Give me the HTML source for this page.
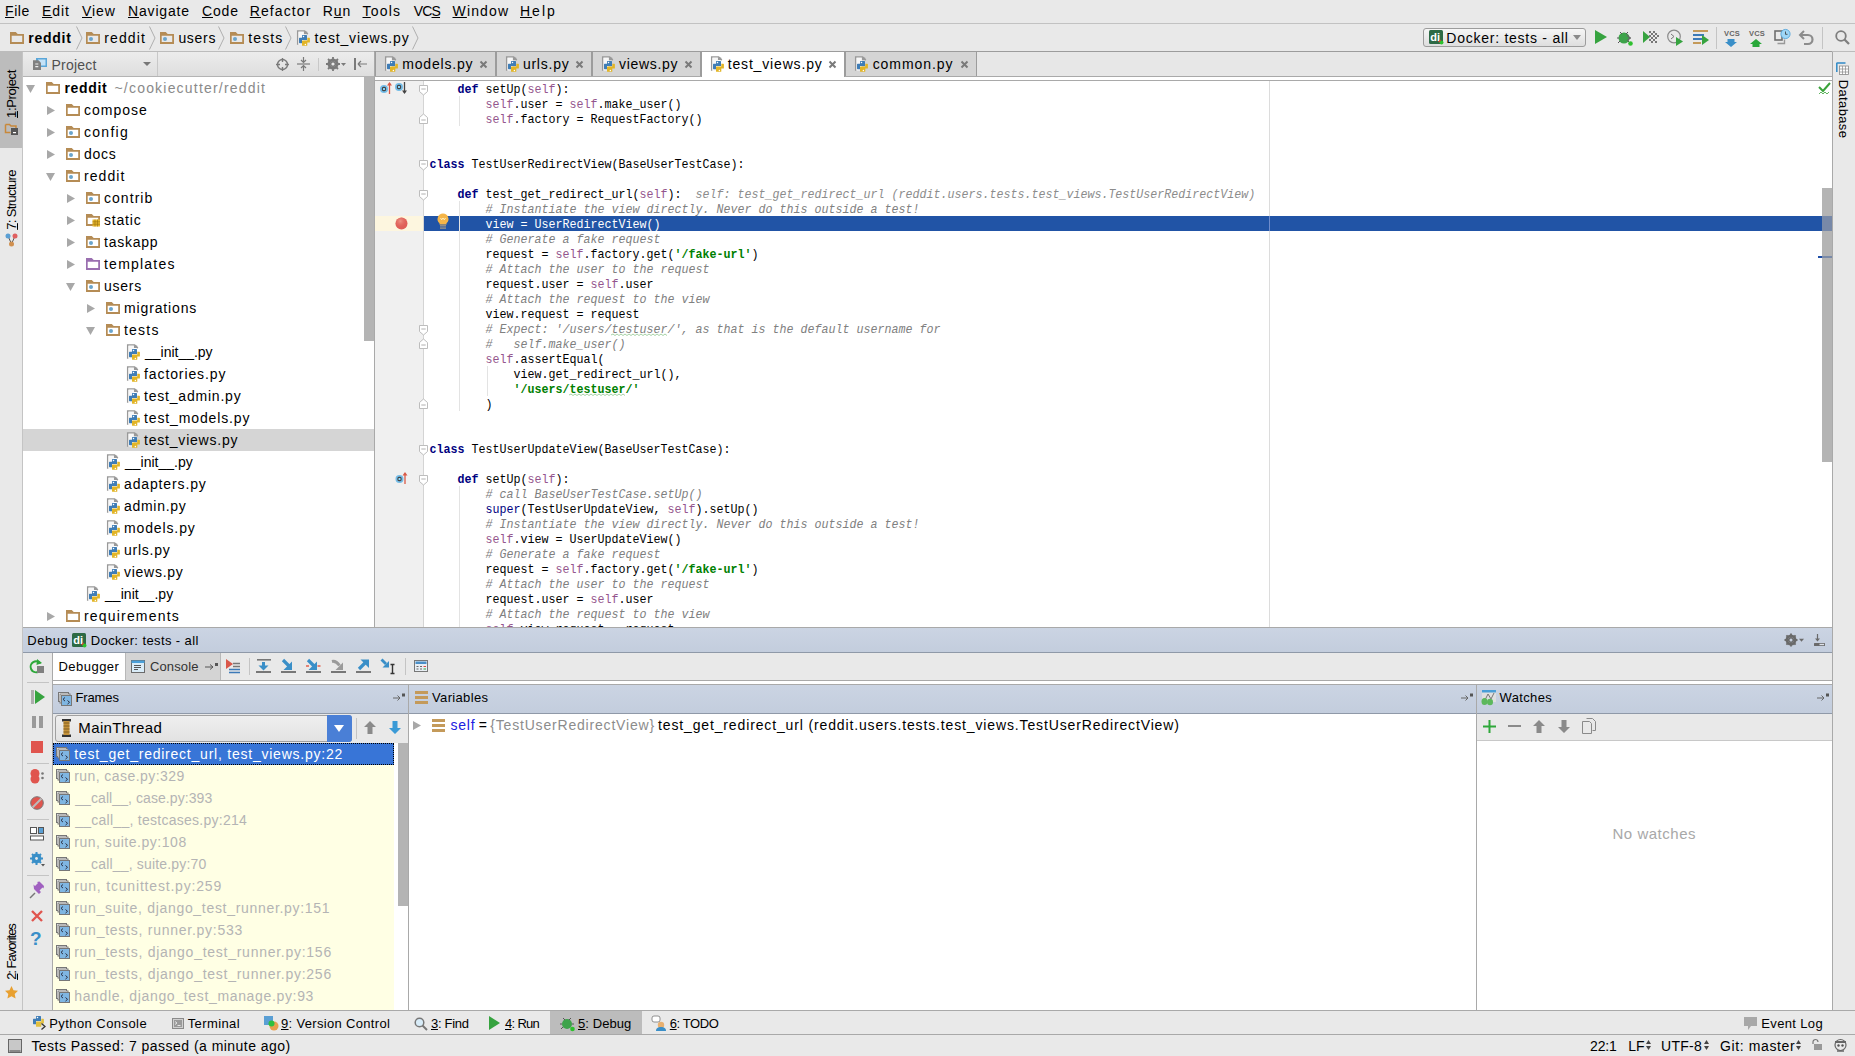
<!DOCTYPE html><html><head><meta charset="utf-8"><style>
*{margin:0;padding:0;box-sizing:border-box}
html,body{width:1855px;height:1056px;overflow:hidden;background:#e9e9e9;position:relative}
body>div{position:absolute}
.t{font-family:"Liberation Sans",sans-serif;font-size:13.5px;letter-spacing:0.95px;word-spacing:-2px;line-height:16px;white-space:pre;color:#000;transform:translateY(-8px)}
.c{font-family:"Liberation Mono",monospace;font-size:13.33px;line-height:15px;white-space:pre;color:#000}
.cw{position:absolute;left:0;top:0;width:1600px;height:600px;transform:scaleX(0.875);transform-origin:0 0}
.us{letter-spacing:-0.6px}
.k{color:#000080;font-weight:bold}
.sf{color:#94558d}
.cm{color:#808080;font-style:italic}
.st{color:#008000;font-weight:bold}
.bi{color:#000080}
.iv{color:#8c8c8c;font-style:italic}
svg{position:absolute;overflow:visible}
u{text-decoration:underline;text-underline-offset:1px}

.vt{font-family:"Liberation Sans",sans-serif;font-size:13px;letter-spacing:0.6px;word-spacing:-2px;line-height:14px;white-space:pre;color:#000;transform:translate(-50%,-50%) rotate(-90deg)}
</style></head><body><div style="left:0px;top:0px;width:1855px;height:23px;background:#e9e9e9"></div><div style="left:0px;top:23px;width:1855px;height:1px;background:#c2c2c2"></div><div class="t" style="left:5.00px;top:11px;font-size:14px;letter-spacing:0.576px;word-spacing:0"><u>F</u>ile</div><div class="t" style="left:42.00px;top:11px;font-size:14px;letter-spacing:0.922px;word-spacing:0"><u>E</u>dit</div><div class="t" style="left:82.00px;top:11px;font-size:14px;letter-spacing:0.923px;word-spacing:0"><u>V</u>iew</div><div class="t" style="left:128.00px;top:11px;font-size:14px;letter-spacing:0.826px;word-spacing:0"><u>N</u>avigate</div><div class="t" style="left:202.00px;top:11px;font-size:14px;letter-spacing:0.856px;word-spacing:0"><u>C</u>ode</div><div class="t" style="left:249.75px;top:11px;font-size:14px;letter-spacing:1.107px;word-spacing:0"><u>R</u>efactor</div><div class="t" style="left:322.75px;top:11px;font-size:14px;letter-spacing:0.927px;word-spacing:0">R<u>u</u>n</div><div class="t" style="left:362.50px;top:11px;font-size:14px;letter-spacing:1.204px;word-spacing:0"><u>T</u>ools</div><div class="t" style="left:413.75px;top:11px;font-size:14px;letter-spacing:-0.849px;word-spacing:0">VC<u>S</u></div><div class="t" style="left:452.50px;top:11px;font-size:14px;letter-spacing:1.163px;word-spacing:0"><u>W</u>indow</div><div class="t" style="left:520.00px;top:11px;font-size:14px;letter-spacing:1.998px;word-spacing:0"><u>H</u>elp</div><div style="left:0px;top:24px;width:1855px;height:27px;background:#e9e9e9"></div><div style="left:0px;top:51px;width:1855px;height:1px;background:#bcbcbc"></div><div style="left:374px;top:51px;width:1458px;height:1px;background:#9c9c9c"></div><svg style="left:10px;top:32px" width="14" height="12" viewBox="0 0 14 12"><path fill-rule="evenodd" d="M0 0H5.8L7.7 2H14V12H0Z M1.7 3.8V10.1H12.2V3.8Z" fill="#b58c55"/></svg><div class="t" style="left:28.30px;top:38px;font-weight:bold;font-size:14px;letter-spacing:0.734px;word-spacing:0">reddit</div><svg style="left:76px;top:26px" width="7" height="24" viewBox="0 0 7 24"><path d="M0.5 0.5L6 12L0.5 23.5" fill="none" stroke="#a8a8a8" stroke-width="0.9"/></svg><svg style="left:86px;top:32px" width="14" height="12" viewBox="0 0 14 12"><path fill-rule="evenodd" d="M0 0H5.8L7.7 2H14V12H0Z M1.7 3.8V10.1H12.2V3.8Z" fill="#b58c55"/><circle cx="5" cy="6.9" r="2" fill="#6aa4cc"/></svg><div class="t" style="left:104.30px;top:38px;font-size:14px;letter-spacing:1.114px;word-spacing:0">reddit</div><svg style="left:148.5px;top:26px" width="7" height="24" viewBox="0 0 7 24"><path d="M0.5 0.5L6 12L0.5 23.5" fill="none" stroke="#a8a8a8" stroke-width="0.9"/></svg><svg style="left:160px;top:32px" width="14" height="12" viewBox="0 0 14 12"><path fill-rule="evenodd" d="M0 0H5.8L7.7 2H14V12H0Z M1.7 3.8V10.1H12.2V3.8Z" fill="#b58c55"/><circle cx="5" cy="6.9" r="2" fill="#6aa4cc"/></svg><div class="t" style="left:178.40px;top:38px;font-size:14px;letter-spacing:0.691px;word-spacing:0">users</div><svg style="left:218px;top:26px" width="7" height="24" viewBox="0 0 7 24"><path d="M0.5 0.5L6 12L0.5 23.5" fill="none" stroke="#a8a8a8" stroke-width="0.9"/></svg><svg style="left:230px;top:32px" width="14" height="12" viewBox="0 0 14 12"><path fill-rule="evenodd" d="M0 0H5.8L7.7 2H14V12H0Z M1.7 3.8V10.1H12.2V3.8Z" fill="#b58c55"/><circle cx="5" cy="6.9" r="2" fill="#6aa4cc"/></svg><div class="t" style="left:248.30px;top:38px;font-size:14px;letter-spacing:1.084px;word-spacing:0">tests</div><svg style="left:285px;top:26px" width="7" height="24" viewBox="0 0 7 24"><path d="M0.5 0.5L6 12L0.5 23.5" fill="none" stroke="#a8a8a8" stroke-width="0.9"/></svg><svg style="left:297px;top:29px" width="14" height="17" viewBox="0 0 14 17"><path d="M0.7 15.7V1.9H7.6L10.8 5.1" fill="none" stroke="#999" stroke-width="1.5"/><rect x="6.8" y="2.6" width="3.4" height="2.4" fill="#999"/><rect x="1.4" y="2.6" width="5.4" height="13" fill="#f7f7f7"/><path d="M5.6 6h3.8a0.6 0.6 0 0 1 0.6 0.6V11.1H5V14.2H2.6A0.6 0.6 0 0 1 2 13.6V9.4A0.6 0.6 0 0 1 2.6 8.8H5V6.6A0.6 0.6 0 0 1 5.6 6Z" fill="#3f7db6"/><circle cx="6.5" cy="7.5" r="0.75" fill="#fff"/><path d="M10.3 8.7H12.3A0.6 0.6 0 0 1 12.9 9.3V13A0.6 0.6 0 0 1 12.3 13.6H10.3V16.2A0.6 0.6 0 0 1 9.7 16.8H5.6A0.6 0.6 0 0 1 5 16.2V12.1A0.6 0.6 0 0 1 5.6 11.5H10.3Z" fill="#e2b526"/><circle cx="8.4" cy="15.5" r="0.75" fill="#fff"/></svg><div class="t" style="left:314.50px;top:38px;font-size:14px;letter-spacing:0.851px;word-spacing:0">test_views.py</div><svg style="left:412px;top:26px" width="7" height="24" viewBox="0 0 7 24"><path d="M0.5 0.5L6 12L0.5 23.5" fill="none" stroke="#a8a8a8" stroke-width="0.9"/></svg><div style="left:1423px;top:28px;width:163px;height:19px;background:linear-gradient(#f6f6f6,#dedede);border:1px solid #9c9c9c;border-radius:3px"></div><svg style="left:1429px;top:30px" width="14" height="14" viewBox="0 0 14 14"><rect x="0" y="0" width="14" height="14" rx="1.5" fill="#2d6a45"/><text x="1.2" y="10.5" font-family="Liberation Sans" font-weight="bold" font-size="11" fill="#fff">di</text><path d="M9 11.5l3-2v4z" fill="#e03030"/><circle cx="12.5" cy="12.5" r="2" fill="#2ec02e"/></svg><div class="t" style="left:1446.30px;top:38px;font-size:14px;letter-spacing:0.748px;word-spacing:0">Docker: tests - all</div><svg style="left:1573px;top:35px" width="8" height="5" viewBox="0 0 8 5"><path d="M0 0h8l-4 5z" fill="#8a8a8a"/></svg><svg style="left:1595px;top:30px" width="12" height="14" viewBox="0 0 12 14"><path d="M0 0L12 7L0 14z" fill="#36a33f"/></svg><svg style="left:1617px;top:29px" width="17" height="17" viewBox="0 0 17 17"><ellipse cx="7" cy="9" rx="5.5" ry="5.5" fill="#3da34a"/><path d="M3 3l2 2M11 3l-2 2M0 9h2M12 9h2M1 14l2-2M13 14l-2-2" stroke="#555" stroke-width="1"/><path d="M10 6l3 3l-3 3" fill="none" stroke="#666" stroke-width="1.2"/><circle cx="13.5" cy="14.5" r="2.3" fill="#2ec02e"/></svg><svg style="left:1643px;top:30px" width="16" height="14" viewBox="0 0 16 14"><path d="M0 1L7 7L0 13z" fill="#36a33f"/><g fill="#777"><rect x="6" y="1" width="2" height="2"/><rect x="10" y="1" width="2" height="2"/><rect x="8" y="3" width="2" height="2"/><rect x="12" y="3" width="2" height="2"/><rect x="6" y="5" width="2" height="2"/><rect x="10" y="5" width="2" height="2"/><rect x="14" y="5" width="2" height="2"/><rect x="8" y="7" width="2" height="2"/><rect x="12" y="7" width="2" height="2"/><rect x="6" y="9" width="2" height="2"/><rect x="10" y="9" width="2" height="2"/><rect x="8" y="11" width="2" height="2"/><rect x="12" y="11" width="2" height="2"/></g></svg><svg style="left:1667px;top:29px" width="17" height="17" viewBox="0 0 17 17"><circle cx="7" cy="7.5" r="6.3" fill="none" stroke="#8a8a8a" stroke-width="1.2"/><path d="M4 5l3 2.5l-3 2.5" fill="none" stroke="#777" stroke-width="1"/><path d="M9 8L16 12.5L9 17z" fill="#36a33f"/></svg><svg style="left:1693px;top:30px" width="16" height="15" viewBox="0 0 16 15"><rect x="0" y="0" width="15" height="2" fill="#c49a5a"/><rect x="0" y="4" width="11" height="2" fill="#3d7ab8"/><rect x="0" y="8" width="9" height="2" fill="#3d7ab8"/><rect x="0" y="12" width="8" height="2" fill="#c49a5a"/><path d="M9 5L16 10L9 15z" fill="#36a33f"/></svg><div style="left:1716px;top:27px;width:1px;height:22px;background:#c4c4c4"></div><svg style="left:1724px;top:30px" width="14" height="17" viewBox="0 0 14 17"><text x="0" y="6" font-family="Liberation Sans" font-size="7.5" font-weight="bold" fill="#666" letter-spacing="0.2">VCS</text><path d="M3.5 9v3H1l6 5l6-5h-2.5V9z" fill="#3a8fc8"/></svg><svg style="left:1749px;top:30px" width="14" height="17" viewBox="0 0 14 17"><text x="0" y="6" font-family="Liberation Sans" font-size="7.5" font-weight="bold" fill="#666" letter-spacing="0.2">VCS</text><path d="M3.5 17v-3H1l6-5l6 5h-2.5v3z" fill="#2aa83a"/></svg><svg style="left:1774px;top:29px" width="16" height="17" viewBox="0 0 16 17"><rect x="1" y="2" width="7" height="9" fill="none" stroke="#6e6e6e" stroke-width="1.6"/><path d="M3.5 14.5h7v-4" fill="none" stroke="#999" stroke-width="1.4"/><circle cx="11.5" cy="5" r="4.6" fill="#9fd6f6" stroke="#4a9fd8" stroke-width="0.8"/><path d="M11.5 2.5v2.8h2" fill="none" stroke="#333" stroke-width="0.8"/></svg><svg style="left:1799px;top:30px" width="15" height="15" viewBox="0 0 15 15"><path d="M5 1L1 5l4 4" fill="none" stroke="#8c8c8c" stroke-width="2"/><path d="M2 5h7a4.5 4.5 0 0 1 0 9h-4" fill="none" stroke="#8c8c8c" stroke-width="2.2"/></svg><div style="left:1822px;top:27px;width:1px;height:22px;background:#c4c4c4"></div><svg style="left:1835px;top:30px" width="15" height="15" viewBox="0 0 15 15"><circle cx="6" cy="6" r="4.8" fill="none" stroke="#7e7e7e" stroke-width="1.8"/><path d="M9.5 9.5L14 14" stroke="#7e7e7e" stroke-width="2.3"/></svg><div style="left:0px;top:52px;width:22px;height:958px;background:#e9e9e9"></div><div style="left:22px;top:52px;width:1px;height:958px;background:#c4c4c4"></div><div style="left:0px;top:52px;width:22px;height:96px;background:#bcbcbc"></div><div class="vt" style="left:12px;top:94.11px;font-size:13px;letter-spacing:-0.386px;word-spacing:0"><u>1</u>:Project</div><svg style="left:5px;top:123px" width="13" height="12" viewBox="0 0 13 12"><path d="M0.5 1.5h4l1.5 1.5h5v3" fill="none" stroke="#c8883a" stroke-width="1.5"/><path d="M0.5 1.5v8h5" fill="none" stroke="#c8883a" stroke-width="1.5"/><rect x="6" y="5" width="7" height="7" fill="#555"/><rect x="8" y="9" width="3" height="1.2" fill="#fff"/></svg><div class="vt" style="left:12px;top:199.68px;font-size:13px;letter-spacing:-0.633px;word-spacing:0"><u>7</u>: Structure</div><svg style="left:5px;top:233px" width="13" height="14" viewBox="0 0 13 14"><path d="M3 3L6.5 11L10 3" fill="none" stroke="#555" stroke-width="1"/><circle cx="3" cy="3" r="2.5" fill="#5a9fd4"/><circle cx="10" cy="3" r="2.5" fill="#e06060"/><circle cx="6.5" cy="11" r="2.5" fill="#d09050"/></svg><div class="vt" style="left:12px;top:951.89px;font-size:13px;letter-spacing:-1.019px;word-spacing:0"><u>2</u>: Favorites</div><svg style="left:5px;top:986px" width="13" height="13" viewBox="0 0 13 13"><path d="M6.5 0l2 4.3l4.5 0.5l-3.3 3.1l0.9 4.6l-4.1-2.3l-4.1 2.3l0.9-4.6L0 4.8l4.5-0.5z" fill="#e8a030"/></svg><div style="left:1832px;top:52px;width:1px;height:958px;background:#a9a9a9"></div><svg style="left:1836px;top:62px" width="13" height="13" viewBox="0 0 13 13"><path d="M0.5 1h9" stroke="#3a8fc8" stroke-width="1.6"/><path d="M0.8 1v9" stroke="#3a8fc8" stroke-width="1.6"/><rect x="3.5" y="4" width="9" height="8.5" fill="#fff" stroke="#888" stroke-width="0.8"/><path d="M3.5 7h9M3.5 10h9M6.5 4v8.5M9.5 4v8.5" stroke="#888" stroke-width="0.7"/></svg><div class="vt" style="left:1843px;top:108.68px;font-size:13px;transform:translate(-50%,-50%) rotate(90deg);letter-spacing:0.369px;word-spacing:0">Database</div><div style="left:23px;top:52px;width:351px;height:24px;background:linear-gradient(#ececec,#dedede)"></div><div style="left:23px;top:76px;width:351px;height:1px;background:#b4b4b4"></div><div style="left:374px;top:52px;width:1px;height:575px;background:#a9a9a9"></div><svg style="left:33px;top:58px" width="14" height="12" viewBox="0 0 14 12"><rect x="3" y="0" width="11" height="9" fill="#5aa6d8"/><rect x="5" y="1.5" width="7.5" height="6" fill="#c4e2f7"/><path d="M0 2.3h5.5l2.5 2.5V12H0z" fill="#808080"/><path d="M2.3 6h3M2.3 8.6h3" stroke="#eee" stroke-width="1.1"/></svg><div class="t" style="left:51.50px;top:65px;color:#505050;font-size:14px;letter-spacing:0.203px;word-spacing:0">Project</div><svg style="left:143px;top:62px" width="8" height="4" viewBox="0 0 8 4"><path d="M0 0h8l-4 4z" fill="#777"/></svg><div style="left:157px;top:52px;width:1px;height:24px;background:#c8c8c8"></div><svg style="left:276px;top:58px" width="13" height="13" viewBox="0 0 13 13"><circle cx="6.5" cy="6.5" r="5" fill="none" stroke="#7a7a7a" stroke-width="1.4"/><path d="M6.5 0v4M6.5 9v4M0 6.5h4M9 6.5h4" stroke="#7a7a7a" stroke-width="1.4"/></svg><svg style="left:297px;top:57px" width="13" height="14" viewBox="0 0 13 14"><path d="M0 7h13" stroke="#7a7a7a" stroke-width="1.2"/><path d="M6.5 0v5M4 3l2.5 2.5L9 3M6.5 14v-5M4 11l2.5-2.5L9 11" fill="none" stroke="#7a7a7a" stroke-width="1.2"/></svg><div style="left:318px;top:58px;width:1px;height:13px;background:#c8c8c8"></div><svg style="left:326px;top:57px" width="20" height="14" viewBox="0 0 20 14"><circle cx="7" cy="7" r="4.2" fill="none" stroke="#7a7a7a" stroke-width="2.6"/><path d="M7 0v14M0 7h14M2 2l10 10M12 2L2 12" stroke="#7a7a7a" stroke-width="1.8"/><circle cx="7" cy="7" r="1.6" fill="#e9e9e9"/><path d="M15 6h5l-2.5 3z" fill="#7a7a7a"/></svg><svg style="left:354px;top:58px" width="13" height="12" viewBox="0 0 13 12"><rect x="0" y="0" width="2" height="12" fill="#7a7a7a"/><path d="M4 6h9M4 6l3-3M4 6l3 3" fill="none" stroke="#7a7a7a" stroke-width="1.2"/></svg><div style="left:23px;top:77px;width:351px;height:550px;background:#fff"></div><div style="left:23px;top:429px;width:351px;height:22px;background:#d5d5d5"></div><svg style="left:26px;top:85px" width="9" height="8" viewBox="0 0 9 8"><path d="M0 0H9L4.5 8z" fill="#a8a8a8"/></svg><svg style="left:46px;top:82px" width="14" height="12" viewBox="0 0 14 12"><path fill-rule="evenodd" d="M0 0H5.8L7.7 2H14V12H0Z M1.7 3.8V10.1H12.2V3.8Z" fill="#b58c55"/></svg><div class="t" style="left:64.50px;top:88px;font-size:14px;font-weight:bold;letter-spacing:0.654px;word-spacing:0">reddit</div><div class="t" style="left:114.50px;top:88px;font-size:14px;color:#8a8a8a;letter-spacing:1.197px;word-spacing:0">~/cookiecutter/reddit</div><svg style="left:47px;top:106px" width="8" height="9" viewBox="0 0 8 9"><path d="M0 0L8 4.5L0 9z" fill="#a8a8a8"/></svg><svg style="left:66px;top:104px" width="14" height="12" viewBox="0 0 14 12"><path fill-rule="evenodd" d="M0 0H5.8L7.7 2H14V12H0Z M1.7 3.8V10.1H12.2V3.8Z" fill="#b58c55"/></svg><div class="t" style="left:84.00px;top:110px;font-size:14px;letter-spacing:0.997px;word-spacing:0">compose</div><svg style="left:47px;top:128px" width="8" height="9" viewBox="0 0 8 9"><path d="M0 0L8 4.5L0 9z" fill="#a8a8a8"/></svg><svg style="left:66px;top:126px" width="14" height="12" viewBox="0 0 14 12"><path fill-rule="evenodd" d="M0 0H5.8L7.7 2H14V12H0Z M1.7 3.8V10.1H12.2V3.8Z" fill="#b58c55"/><circle cx="5" cy="6.9" r="2" fill="#6aa4cc"/></svg><div class="t" style="left:84.00px;top:132px;font-size:14px;letter-spacing:1.286px;word-spacing:0">config</div><svg style="left:47px;top:150px" width="8" height="9" viewBox="0 0 8 9"><path d="M0 0L8 4.5L0 9z" fill="#a8a8a8"/></svg><svg style="left:66px;top:148px" width="14" height="12" viewBox="0 0 14 12"><path fill-rule="evenodd" d="M0 0H5.8L7.7 2H14V12H0Z M1.7 3.8V10.1H12.2V3.8Z" fill="#b58c55"/><circle cx="5" cy="6.9" r="2" fill="#6aa4cc"/></svg><div class="t" style="left:84.00px;top:154px;font-size:14px;letter-spacing:0.726px;word-spacing:0">docs</div><svg style="left:46px;top:173px" width="9" height="8" viewBox="0 0 9 8"><path d="M0 0H9L4.5 8z" fill="#a8a8a8"/></svg><svg style="left:66px;top:170px" width="14" height="12" viewBox="0 0 14 12"><path fill-rule="evenodd" d="M0 0H5.8L7.7 2H14V12H0Z M1.7 3.8V10.1H12.2V3.8Z" fill="#b58c55"/><circle cx="5" cy="6.9" r="2" fill="#6aa4cc"/></svg><div class="t" style="left:84.00px;top:176px;font-size:14px;letter-spacing:1.074px;word-spacing:0">reddit</div><svg style="left:67px;top:194px" width="8" height="9" viewBox="0 0 8 9"><path d="M0 0L8 4.5L0 9z" fill="#a8a8a8"/></svg><svg style="left:86px;top:192px" width="14" height="12" viewBox="0 0 14 12"><path fill-rule="evenodd" d="M0 0H5.8L7.7 2H14V12H0Z M1.7 3.8V10.1H12.2V3.8Z" fill="#b58c55"/><circle cx="5" cy="6.9" r="2" fill="#6aa4cc"/></svg><div class="t" style="left:104.00px;top:198px;font-size:14px;letter-spacing:1.044px;word-spacing:0">contrib</div><svg style="left:67px;top:216px" width="8" height="9" viewBox="0 0 8 9"><path d="M0 0L8 4.5L0 9z" fill="#a8a8a8"/></svg><svg style="left:86px;top:214px" width="14" height="12" viewBox="0 0 14 12"><path fill-rule="evenodd" d="M0 0H5.8L7.7 2H14V12H0Z M1.7 3.8V10.1H12.2V3.8Z" fill="#b58c55"/><rect x="6.5" y="5.5" width="7.5" height="7" fill="#e8b830"/><path d="M6.5 7.8h7.5M6.5 10.2h7.5M9 5.5v7M11.5 5.5v7" stroke="#a07810" stroke-width="0.7"/></svg><div class="t" style="left:104.00px;top:220px;font-size:14px;letter-spacing:0.815px;word-spacing:0">static</div><svg style="left:67px;top:238px" width="8" height="9" viewBox="0 0 8 9"><path d="M0 0L8 4.5L0 9z" fill="#a8a8a8"/></svg><svg style="left:86px;top:236px" width="14" height="12" viewBox="0 0 14 12"><path fill-rule="evenodd" d="M0 0H5.8L7.7 2H14V12H0Z M1.7 3.8V10.1H12.2V3.8Z" fill="#b58c55"/><circle cx="5" cy="6.9" r="2" fill="#6aa4cc"/></svg><div class="t" style="left:104.00px;top:242px;font-size:14px;letter-spacing:0.750px;word-spacing:0">taskapp</div><svg style="left:67px;top:260px" width="8" height="9" viewBox="0 0 8 9"><path d="M0 0L8 4.5L0 9z" fill="#a8a8a8"/></svg><svg style="left:86px;top:258px" width="14" height="12" viewBox="0 0 14 12"><path fill-rule="evenodd" d="M0 0H5.8L7.7 2H14V12H0Z M1.7 3.8V10.1H12.2V3.8Z" fill="#9a6fb0"/></svg><div class="t" style="left:104.00px;top:264px;font-size:14px;letter-spacing:1.225px;word-spacing:0">templates</div><svg style="left:66px;top:283px" width="9" height="8" viewBox="0 0 9 8"><path d="M0 0H9L4.5 8z" fill="#a8a8a8"/></svg><svg style="left:86px;top:280px" width="14" height="12" viewBox="0 0 14 12"><path fill-rule="evenodd" d="M0 0H5.8L7.7 2H14V12H0Z M1.7 3.8V10.1H12.2V3.8Z" fill="#b58c55"/><circle cx="5" cy="6.9" r="2" fill="#6aa4cc"/></svg><div class="t" style="left:104.00px;top:286px;font-size:14px;letter-spacing:0.766px;word-spacing:0">users</div><svg style="left:87px;top:304px" width="8" height="9" viewBox="0 0 8 9"><path d="M0 0L8 4.5L0 9z" fill="#a8a8a8"/></svg><svg style="left:106px;top:302px" width="14" height="12" viewBox="0 0 14 12"><path fill-rule="evenodd" d="M0 0H5.8L7.7 2H14V12H0Z M1.7 3.8V10.1H12.2V3.8Z" fill="#b58c55"/><circle cx="5" cy="6.9" r="2" fill="#6aa4cc"/></svg><div class="t" style="left:124.00px;top:308px;font-size:14px;letter-spacing:0.858px;word-spacing:0">migrations</div><svg style="left:86px;top:327px" width="9" height="8" viewBox="0 0 9 8"><path d="M0 0H9L4.5 8z" fill="#a8a8a8"/></svg><svg style="left:106px;top:324px" width="14" height="12" viewBox="0 0 14 12"><path fill-rule="evenodd" d="M0 0H5.8L7.7 2H14V12H0Z M1.7 3.8V10.1H12.2V3.8Z" fill="#b58c55"/><circle cx="5" cy="6.9" r="2" fill="#6aa4cc"/></svg><div class="t" style="left:124.00px;top:330px;font-size:14px;letter-spacing:1.209px;word-spacing:0">tests</div><svg style="left:127px;top:343px" width="14" height="17" viewBox="0 0 14 17"><path d="M0.7 15.7V1.9H7.6L10.8 5.1" fill="none" stroke="#999" stroke-width="1.5"/><rect x="6.8" y="2.6" width="3.4" height="2.4" fill="#999"/><rect x="1.4" y="2.6" width="5.4" height="13" fill="#f7f7f7"/><path d="M5.6 6h3.8a0.6 0.6 0 0 1 0.6 0.6V11.1H5V14.2H2.6A0.6 0.6 0 0 1 2 13.6V9.4A0.6 0.6 0 0 1 2.6 8.8H5V6.6A0.6 0.6 0 0 1 5.6 6Z" fill="#3f7db6"/><circle cx="6.5" cy="7.5" r="0.75" fill="#fff"/><path d="M10.3 8.7H12.3A0.6 0.6 0 0 1 12.9 9.3V13A0.6 0.6 0 0 1 12.3 13.6H10.3V16.2A0.6 0.6 0 0 1 9.7 16.8H5.6A0.6 0.6 0 0 1 5 16.2V12.1A0.6 0.6 0 0 1 5.6 11.5H10.3Z" fill="#e2b526"/><circle cx="8.4" cy="15.5" r="0.75" fill="#fff"/></svg><div class="t" style="left:145.00px;top:352px;font-size:14px;letter-spacing:-0.012px;word-spacing:0">__init__.py</div><svg style="left:127px;top:365px" width="14" height="17" viewBox="0 0 14 17"><path d="M0.7 15.7V1.9H7.6L10.8 5.1" fill="none" stroke="#999" stroke-width="1.5"/><rect x="6.8" y="2.6" width="3.4" height="2.4" fill="#999"/><rect x="1.4" y="2.6" width="5.4" height="13" fill="#f7f7f7"/><path d="M5.6 6h3.8a0.6 0.6 0 0 1 0.6 0.6V11.1H5V14.2H2.6A0.6 0.6 0 0 1 2 13.6V9.4A0.6 0.6 0 0 1 2.6 8.8H5V6.6A0.6 0.6 0 0 1 5.6 6Z" fill="#3f7db6"/><circle cx="6.5" cy="7.5" r="0.75" fill="#fff"/><path d="M10.3 8.7H12.3A0.6 0.6 0 0 1 12.9 9.3V13A0.6 0.6 0 0 1 12.3 13.6H10.3V16.2A0.6 0.6 0 0 1 9.7 16.8H5.6A0.6 0.6 0 0 1 5 16.2V12.1A0.6 0.6 0 0 1 5.6 11.5H10.3Z" fill="#e2b526"/><circle cx="8.4" cy="15.5" r="0.75" fill="#fff"/></svg><div class="t" style="left:144.00px;top:374px;font-size:14px;letter-spacing:0.901px;word-spacing:0">factories.py</div><svg style="left:127px;top:387px" width="14" height="17" viewBox="0 0 14 17"><path d="M0.7 15.7V1.9H7.6L10.8 5.1" fill="none" stroke="#999" stroke-width="1.5"/><rect x="6.8" y="2.6" width="3.4" height="2.4" fill="#999"/><rect x="1.4" y="2.6" width="5.4" height="13" fill="#f7f7f7"/><path d="M5.6 6h3.8a0.6 0.6 0 0 1 0.6 0.6V11.1H5V14.2H2.6A0.6 0.6 0 0 1 2 13.6V9.4A0.6 0.6 0 0 1 2.6 8.8H5V6.6A0.6 0.6 0 0 1 5.6 6Z" fill="#3f7db6"/><circle cx="6.5" cy="7.5" r="0.75" fill="#fff"/><path d="M10.3 8.7H12.3A0.6 0.6 0 0 1 12.9 9.3V13A0.6 0.6 0 0 1 12.3 13.6H10.3V16.2A0.6 0.6 0 0 1 9.7 16.8H5.6A0.6 0.6 0 0 1 5 16.2V12.1A0.6 0.6 0 0 1 5.6 11.5H10.3Z" fill="#e2b526"/><circle cx="8.4" cy="15.5" r="0.75" fill="#fff"/></svg><div class="t" style="left:144.00px;top:396px;font-size:14px;letter-spacing:0.795px;word-spacing:0">test_admin.py</div><svg style="left:127px;top:409px" width="14" height="17" viewBox="0 0 14 17"><path d="M0.7 15.7V1.9H7.6L10.8 5.1" fill="none" stroke="#999" stroke-width="1.5"/><rect x="6.8" y="2.6" width="3.4" height="2.4" fill="#999"/><rect x="1.4" y="2.6" width="5.4" height="13" fill="#f7f7f7"/><path d="M5.6 6h3.8a0.6 0.6 0 0 1 0.6 0.6V11.1H5V14.2H2.6A0.6 0.6 0 0 1 2 13.6V9.4A0.6 0.6 0 0 1 2.6 8.8H5V6.6A0.6 0.6 0 0 1 5.6 6Z" fill="#3f7db6"/><circle cx="6.5" cy="7.5" r="0.75" fill="#fff"/><path d="M10.3 8.7H12.3A0.6 0.6 0 0 1 12.9 9.3V13A0.6 0.6 0 0 1 12.3 13.6H10.3V16.2A0.6 0.6 0 0 1 9.7 16.8H5.6A0.6 0.6 0 0 1 5 16.2V12.1A0.6 0.6 0 0 1 5.6 11.5H10.3Z" fill="#e2b526"/><circle cx="8.4" cy="15.5" r="0.75" fill="#fff"/></svg><div class="t" style="left:144.00px;top:418px;font-size:14px;letter-spacing:0.872px;word-spacing:0">test_models.py</div><svg style="left:127px;top:431px" width="14" height="17" viewBox="0 0 14 17"><path d="M0.7 15.7V1.9H7.6L10.8 5.1" fill="none" stroke="#999" stroke-width="1.5"/><rect x="6.8" y="2.6" width="3.4" height="2.4" fill="#999"/><rect x="1.4" y="2.6" width="5.4" height="13" fill="#f7f7f7"/><path d="M5.6 6h3.8a0.6 0.6 0 0 1 0.6 0.6V11.1H5V14.2H2.6A0.6 0.6 0 0 1 2 13.6V9.4A0.6 0.6 0 0 1 2.6 8.8H5V6.6A0.6 0.6 0 0 1 5.6 6Z" fill="#3f7db6"/><circle cx="6.5" cy="7.5" r="0.75" fill="#fff"/><path d="M10.3 8.7H12.3A0.6 0.6 0 0 1 12.9 9.3V13A0.6 0.6 0 0 1 12.3 13.6H10.3V16.2A0.6 0.6 0 0 1 9.7 16.8H5.6A0.6 0.6 0 0 1 5 16.2V12.1A0.6 0.6 0 0 1 5.6 11.5H10.3Z" fill="#e2b526"/><circle cx="8.4" cy="15.5" r="0.75" fill="#fff"/></svg><div class="t" style="left:144.00px;top:440px;font-size:14px;letter-spacing:0.797px;word-spacing:0">test_views.py</div><svg style="left:107px;top:453px" width="14" height="17" viewBox="0 0 14 17"><path d="M0.7 15.7V1.9H7.6L10.8 5.1" fill="none" stroke="#999" stroke-width="1.5"/><rect x="6.8" y="2.6" width="3.4" height="2.4" fill="#999"/><rect x="1.4" y="2.6" width="5.4" height="13" fill="#f7f7f7"/><path d="M5.6 6h3.8a0.6 0.6 0 0 1 0.6 0.6V11.1H5V14.2H2.6A0.6 0.6 0 0 1 2 13.6V9.4A0.6 0.6 0 0 1 2.6 8.8H5V6.6A0.6 0.6 0 0 1 5.6 6Z" fill="#3f7db6"/><circle cx="6.5" cy="7.5" r="0.75" fill="#fff"/><path d="M10.3 8.7H12.3A0.6 0.6 0 0 1 12.9 9.3V13A0.6 0.6 0 0 1 12.3 13.6H10.3V16.2A0.6 0.6 0 0 1 9.7 16.8H5.6A0.6 0.6 0 0 1 5 16.2V12.1A0.6 0.6 0 0 1 5.6 11.5H10.3Z" fill="#e2b526"/><circle cx="8.4" cy="15.5" r="0.75" fill="#fff"/></svg><div class="t" style="left:125.00px;top:462px;font-size:14px;letter-spacing:0.008px;word-spacing:0">__init__.py</div><svg style="left:107px;top:475px" width="14" height="17" viewBox="0 0 14 17"><path d="M0.7 15.7V1.9H7.6L10.8 5.1" fill="none" stroke="#999" stroke-width="1.5"/><rect x="6.8" y="2.6" width="3.4" height="2.4" fill="#999"/><rect x="1.4" y="2.6" width="5.4" height="13" fill="#f7f7f7"/><path d="M5.6 6h3.8a0.6 0.6 0 0 1 0.6 0.6V11.1H5V14.2H2.6A0.6 0.6 0 0 1 2 13.6V9.4A0.6 0.6 0 0 1 2.6 8.8H5V6.6A0.6 0.6 0 0 1 5.6 6Z" fill="#3f7db6"/><circle cx="6.5" cy="7.5" r="0.75" fill="#fff"/><path d="M10.3 8.7H12.3A0.6 0.6 0 0 1 12.9 9.3V13A0.6 0.6 0 0 1 12.3 13.6H10.3V16.2A0.6 0.6 0 0 1 9.7 16.8H5.6A0.6 0.6 0 0 1 5 16.2V12.1A0.6 0.6 0 0 1 5.6 11.5H10.3Z" fill="#e2b526"/><circle cx="8.4" cy="15.5" r="0.75" fill="#fff"/></svg><div class="t" style="left:124.00px;top:484px;font-size:14px;letter-spacing:0.864px;word-spacing:0">adapters.py</div><svg style="left:107px;top:497px" width="14" height="17" viewBox="0 0 14 17"><path d="M0.7 15.7V1.9H7.6L10.8 5.1" fill="none" stroke="#999" stroke-width="1.5"/><rect x="6.8" y="2.6" width="3.4" height="2.4" fill="#999"/><rect x="1.4" y="2.6" width="5.4" height="13" fill="#f7f7f7"/><path d="M5.6 6h3.8a0.6 0.6 0 0 1 0.6 0.6V11.1H5V14.2H2.6A0.6 0.6 0 0 1 2 13.6V9.4A0.6 0.6 0 0 1 2.6 8.8H5V6.6A0.6 0.6 0 0 1 5.6 6Z" fill="#3f7db6"/><circle cx="6.5" cy="7.5" r="0.75" fill="#fff"/><path d="M10.3 8.7H12.3A0.6 0.6 0 0 1 12.9 9.3V13A0.6 0.6 0 0 1 12.3 13.6H10.3V16.2A0.6 0.6 0 0 1 9.7 16.8H5.6A0.6 0.6 0 0 1 5 16.2V12.1A0.6 0.6 0 0 1 5.6 11.5H10.3Z" fill="#e2b526"/><circle cx="8.4" cy="15.5" r="0.75" fill="#fff"/></svg><div class="t" style="left:124.00px;top:506px;font-size:14px;letter-spacing:0.699px;word-spacing:0">admin.py</div><svg style="left:107px;top:519px" width="14" height="17" viewBox="0 0 14 17"><path d="M0.7 15.7V1.9H7.6L10.8 5.1" fill="none" stroke="#999" stroke-width="1.5"/><rect x="6.8" y="2.6" width="3.4" height="2.4" fill="#999"/><rect x="1.4" y="2.6" width="5.4" height="13" fill="#f7f7f7"/><path d="M5.6 6h3.8a0.6 0.6 0 0 1 0.6 0.6V11.1H5V14.2H2.6A0.6 0.6 0 0 1 2 13.6V9.4A0.6 0.6 0 0 1 2.6 8.8H5V6.6A0.6 0.6 0 0 1 5.6 6Z" fill="#3f7db6"/><circle cx="6.5" cy="7.5" r="0.75" fill="#fff"/><path d="M10.3 8.7H12.3A0.6 0.6 0 0 1 12.9 9.3V13A0.6 0.6 0 0 1 12.3 13.6H10.3V16.2A0.6 0.6 0 0 1 9.7 16.8H5.6A0.6 0.6 0 0 1 5 16.2V12.1A0.6 0.6 0 0 1 5.6 11.5H10.3Z" fill="#e2b526"/><circle cx="8.4" cy="15.5" r="0.75" fill="#fff"/></svg><div class="t" style="left:124.00px;top:528px;font-size:14px;letter-spacing:0.874px;word-spacing:0">models.py</div><svg style="left:107px;top:541px" width="14" height="17" viewBox="0 0 14 17"><path d="M0.7 15.7V1.9H7.6L10.8 5.1" fill="none" stroke="#999" stroke-width="1.5"/><rect x="6.8" y="2.6" width="3.4" height="2.4" fill="#999"/><rect x="1.4" y="2.6" width="5.4" height="13" fill="#f7f7f7"/><path d="M5.6 6h3.8a0.6 0.6 0 0 1 0.6 0.6V11.1H5V14.2H2.6A0.6 0.6 0 0 1 2 13.6V9.4A0.6 0.6 0 0 1 2.6 8.8H5V6.6A0.6 0.6 0 0 1 5.6 6Z" fill="#3f7db6"/><circle cx="6.5" cy="7.5" r="0.75" fill="#fff"/><path d="M10.3 8.7H12.3A0.6 0.6 0 0 1 12.9 9.3V13A0.6 0.6 0 0 1 12.3 13.6H10.3V16.2A0.6 0.6 0 0 1 9.7 16.8H5.6A0.6 0.6 0 0 1 5 16.2V12.1A0.6 0.6 0 0 1 5.6 11.5H10.3Z" fill="#e2b526"/><circle cx="8.4" cy="15.5" r="0.75" fill="#fff"/></svg><div class="t" style="left:124.00px;top:550px;font-size:14px;letter-spacing:0.761px;word-spacing:0">urls.py</div><svg style="left:107px;top:563px" width="14" height="17" viewBox="0 0 14 17"><path d="M0.7 15.7V1.9H7.6L10.8 5.1" fill="none" stroke="#999" stroke-width="1.5"/><rect x="6.8" y="2.6" width="3.4" height="2.4" fill="#999"/><rect x="1.4" y="2.6" width="5.4" height="13" fill="#f7f7f7"/><path d="M5.6 6h3.8a0.6 0.6 0 0 1 0.6 0.6V11.1H5V14.2H2.6A0.6 0.6 0 0 1 2 13.6V9.4A0.6 0.6 0 0 1 2.6 8.8H5V6.6A0.6 0.6 0 0 1 5.6 6Z" fill="#3f7db6"/><circle cx="6.5" cy="7.5" r="0.75" fill="#fff"/><path d="M10.3 8.7H12.3A0.6 0.6 0 0 1 12.9 9.3V13A0.6 0.6 0 0 1 12.3 13.6H10.3V16.2A0.6 0.6 0 0 1 9.7 16.8H5.6A0.6 0.6 0 0 1 5 16.2V12.1A0.6 0.6 0 0 1 5.6 11.5H10.3Z" fill="#e2b526"/><circle cx="8.4" cy="15.5" r="0.75" fill="#fff"/></svg><div class="t" style="left:124.00px;top:572px;font-size:14px;letter-spacing:0.731px;word-spacing:0">views.py</div><svg style="left:87px;top:585px" width="14" height="17" viewBox="0 0 14 17"><path d="M0.7 15.7V1.9H7.6L10.8 5.1" fill="none" stroke="#999" stroke-width="1.5"/><rect x="6.8" y="2.6" width="3.4" height="2.4" fill="#999"/><rect x="1.4" y="2.6" width="5.4" height="13" fill="#f7f7f7"/><path d="M5.6 6h3.8a0.6 0.6 0 0 1 0.6 0.6V11.1H5V14.2H2.6A0.6 0.6 0 0 1 2 13.6V9.4A0.6 0.6 0 0 1 2.6 8.8H5V6.6A0.6 0.6 0 0 1 5.6 6Z" fill="#3f7db6"/><circle cx="6.5" cy="7.5" r="0.75" fill="#fff"/><path d="M10.3 8.7H12.3A0.6 0.6 0 0 1 12.9 9.3V13A0.6 0.6 0 0 1 12.3 13.6H10.3V16.2A0.6 0.6 0 0 1 9.7 16.8H5.6A0.6 0.6 0 0 1 5 16.2V12.1A0.6 0.6 0 0 1 5.6 11.5H10.3Z" fill="#e2b526"/><circle cx="8.4" cy="15.5" r="0.75" fill="#fff"/></svg><div class="t" style="left:105.00px;top:594px;font-size:14px;letter-spacing:0.048px;word-spacing:0">__init__.py</div><svg style="left:47px;top:612px" width="8" height="9" viewBox="0 0 8 9"><path d="M0 0L8 4.5L0 9z" fill="#a8a8a8"/></svg><svg style="left:66px;top:610px" width="14" height="12" viewBox="0 0 14 12"><path fill-rule="evenodd" d="M0 0H5.8L7.7 2H14V12H0Z M1.7 3.8V10.1H12.2V3.8Z" fill="#b58c55"/></svg><div class="t" style="left:84.00px;top:616px;font-size:14px;letter-spacing:1.182px;word-spacing:0">requirements</div><div style="left:364px;top:77px;width:10px;height:264px;background:#b4b4b4"></div><div style="left:375px;top:52px;width:1457px;height:25px;background:#e7e7e7"></div><div style="left:375px;top:51px;width:121px;height:26px;background:#d5d5d5;border:1px solid #9c9c9c;border-bottom:none"></div><svg style="left:385px;top:55px" width="14" height="17" viewBox="0 0 14 17"><path d="M0.7 15.7V1.9H7.6L10.8 5.1" fill="none" stroke="#999" stroke-width="1.5"/><rect x="6.8" y="2.6" width="3.4" height="2.4" fill="#999"/><rect x="1.4" y="2.6" width="5.4" height="13" fill="#f7f7f7"/><path d="M5.6 6h3.8a0.6 0.6 0 0 1 0.6 0.6V11.1H5V14.2H2.6A0.6 0.6 0 0 1 2 13.6V9.4A0.6 0.6 0 0 1 2.6 8.8H5V6.6A0.6 0.6 0 0 1 5.6 6Z" fill="#3f7db6"/><circle cx="6.5" cy="7.5" r="0.75" fill="#fff"/><path d="M10.3 8.7H12.3A0.6 0.6 0 0 1 12.9 9.3V13A0.6 0.6 0 0 1 12.3 13.6H10.3V16.2A0.6 0.6 0 0 1 9.7 16.8H5.6A0.6 0.6 0 0 1 5 16.2V12.1A0.6 0.6 0 0 1 5.6 11.5H10.3Z" fill="#e2b526"/><circle cx="8.4" cy="15.5" r="0.75" fill="#fff"/></svg><div class="t" style="left:402.30px;top:64px;font-size:14px;letter-spacing:0.812px;word-spacing:0">models.py</div><svg style="left:480px;top:61px" width="7" height="7" viewBox="0 0 7 7"><path d="M0.5 0.5l6 6M6.5 0.5l-6 6" stroke="#7a7a7a" stroke-width="2"/></svg><div style="left:496px;top:51px;width:96px;height:26px;background:#d5d5d5;border:1px solid #9c9c9c;border-bottom:none"></div><svg style="left:506px;top:55px" width="14" height="17" viewBox="0 0 14 17"><path d="M0.7 15.7V1.9H7.6L10.8 5.1" fill="none" stroke="#999" stroke-width="1.5"/><rect x="6.8" y="2.6" width="3.4" height="2.4" fill="#999"/><rect x="1.4" y="2.6" width="5.4" height="13" fill="#f7f7f7"/><path d="M5.6 6h3.8a0.6 0.6 0 0 1 0.6 0.6V11.1H5V14.2H2.6A0.6 0.6 0 0 1 2 13.6V9.4A0.6 0.6 0 0 1 2.6 8.8H5V6.6A0.6 0.6 0 0 1 5.6 6Z" fill="#3f7db6"/><circle cx="6.5" cy="7.5" r="0.75" fill="#fff"/><path d="M10.3 8.7H12.3A0.6 0.6 0 0 1 12.9 9.3V13A0.6 0.6 0 0 1 12.3 13.6H10.3V16.2A0.6 0.6 0 0 1 9.7 16.8H5.6A0.6 0.6 0 0 1 5 16.2V12.1A0.6 0.6 0 0 1 5.6 11.5H10.3Z" fill="#e2b526"/><circle cx="8.4" cy="15.5" r="0.75" fill="#fff"/></svg><div class="t" style="left:522.90px;top:64px;font-size:14px;letter-spacing:0.761px;word-spacing:0">urls.py</div><svg style="left:576px;top:61px" width="7" height="7" viewBox="0 0 7 7"><path d="M0.5 0.5l6 6M6.5 0.5l-6 6" stroke="#7a7a7a" stroke-width="2"/></svg><div style="left:592px;top:51px;width:109px;height:26px;background:#d5d5d5;border:1px solid #9c9c9c;border-bottom:none"></div><svg style="left:602px;top:55px" width="14" height="17" viewBox="0 0 14 17"><path d="M0.7 15.7V1.9H7.6L10.8 5.1" fill="none" stroke="#999" stroke-width="1.5"/><rect x="6.8" y="2.6" width="3.4" height="2.4" fill="#999"/><rect x="1.4" y="2.6" width="5.4" height="13" fill="#f7f7f7"/><path d="M5.6 6h3.8a0.6 0.6 0 0 1 0.6 0.6V11.1H5V14.2H2.6A0.6 0.6 0 0 1 2 13.6V9.4A0.6 0.6 0 0 1 2.6 8.8H5V6.6A0.6 0.6 0 0 1 5.6 6Z" fill="#3f7db6"/><circle cx="6.5" cy="7.5" r="0.75" fill="#fff"/><path d="M10.3 8.7H12.3A0.6 0.6 0 0 1 12.9 9.3V13A0.6 0.6 0 0 1 12.3 13.6H10.3V16.2A0.6 0.6 0 0 1 9.7 16.8H5.6A0.6 0.6 0 0 1 5 16.2V12.1A0.6 0.6 0 0 1 5.6 11.5H10.3Z" fill="#e2b526"/><circle cx="8.4" cy="15.5" r="0.75" fill="#fff"/></svg><div class="t" style="left:619.00px;top:64px;font-size:14px;letter-spacing:0.674px;word-spacing:0">views.py</div><svg style="left:685px;top:61px" width="7" height="7" viewBox="0 0 7 7"><path d="M0.5 0.5l6 6M6.5 0.5l-6 6" stroke="#7a7a7a" stroke-width="2"/></svg><div style="left:701px;top:51px;width:144px;height:26px;background:#fff;border:1px solid #9c9c9c;border-bottom:none"></div><svg style="left:711px;top:55px" width="14" height="17" viewBox="0 0 14 17"><path d="M0.7 15.7V1.9H7.6L10.8 5.1" fill="none" stroke="#999" stroke-width="1.5"/><rect x="6.8" y="2.6" width="3.4" height="2.4" fill="#999"/><rect x="1.4" y="2.6" width="5.4" height="13" fill="#f7f7f7"/><path d="M5.6 6h3.8a0.6 0.6 0 0 1 0.6 0.6V11.1H5V14.2H2.6A0.6 0.6 0 0 1 2 13.6V9.4A0.6 0.6 0 0 1 2.6 8.8H5V6.6A0.6 0.6 0 0 1 5.6 6Z" fill="#3f7db6"/><circle cx="6.5" cy="7.5" r="0.75" fill="#fff"/><path d="M10.3 8.7H12.3A0.6 0.6 0 0 1 12.9 9.3V13A0.6 0.6 0 0 1 12.3 13.6H10.3V16.2A0.6 0.6 0 0 1 9.7 16.8H5.6A0.6 0.6 0 0 1 5 16.2V12.1A0.6 0.6 0 0 1 5.6 11.5H10.3Z" fill="#e2b526"/><circle cx="8.4" cy="15.5" r="0.75" fill="#fff"/></svg><div class="t" style="left:727.70px;top:64px;font-size:14px;letter-spacing:0.839px;word-spacing:0">test_views.py</div><svg style="left:829px;top:61px" width="7" height="7" viewBox="0 0 7 7"><path d="M0.5 0.5l6 6M6.5 0.5l-6 6" stroke="#7a7a7a" stroke-width="2"/></svg><div style="left:845px;top:51px;width:132px;height:26px;background:#d5d5d5;border:1px solid #9c9c9c;border-bottom:none"></div><svg style="left:855px;top:55px" width="14" height="17" viewBox="0 0 14 17"><path d="M0.7 15.7V1.9H7.6L10.8 5.1" fill="none" stroke="#999" stroke-width="1.5"/><rect x="6.8" y="2.6" width="3.4" height="2.4" fill="#999"/><rect x="1.4" y="2.6" width="5.4" height="13" fill="#f7f7f7"/><path d="M5.6 6h3.8a0.6 0.6 0 0 1 0.6 0.6V11.1H5V14.2H2.6A0.6 0.6 0 0 1 2 13.6V9.4A0.6 0.6 0 0 1 2.6 8.8H5V6.6A0.6 0.6 0 0 1 5.6 6Z" fill="#3f7db6"/><circle cx="6.5" cy="7.5" r="0.75" fill="#fff"/><path d="M10.3 8.7H12.3A0.6 0.6 0 0 1 12.9 9.3V13A0.6 0.6 0 0 1 12.3 13.6H10.3V16.2A0.6 0.6 0 0 1 9.7 16.8H5.6A0.6 0.6 0 0 1 5 16.2V12.1A0.6 0.6 0 0 1 5.6 11.5H10.3Z" fill="#e2b526"/><circle cx="8.4" cy="15.5" r="0.75" fill="#fff"/></svg><div class="t" style="left:872.70px;top:64px;font-size:14px;letter-spacing:0.930px;word-spacing:0">common.py</div><svg style="left:961px;top:61px" width="7" height="7" viewBox="0 0 7 7"><path d="M0.5 0.5l6 6M6.5 0.5l-6 6" stroke="#7a7a7a" stroke-width="2"/></svg><div style="left:375px;top:76px;width:326px;height:1px;background:#a9a9a9"></div><div style="left:845px;top:76px;width:987px;height:1px;background:#a9a9a9"></div><div style="left:375px;top:77px;width:1457px;height:3px;background:#fff"></div><div style="left:375px;top:80px;width:1457px;height:1px;background:#a9a9a9"></div><div style="left:375px;top:81px;width:1457px;height:546px;background:#fff"></div><div style="left:375px;top:81px;width:48px;height:546px;background:#f0f0f0"></div><div style="left:423px;top:81px;width:1px;height:546px;background:#d4d4d4"></div><div style="left:1269px;top:81px;width:1px;height:546px;background:#dcdcdc"></div><div style="left:375px;top:216px;width:48px;height:15px;background:#fdf6df"></div><div style="left:424px;top:216px;width:1398px;height:15px;background:#2154a6"></div><div style="left:459px;top:96px;width:1px;height:30px;background:#e3e3e3"></div><div style="left:459px;top:201px;width:1px;height:210px;background:#e3e3e3"></div><div style="left:487px;top:366px;width:1px;height:30px;background:#e3e3e3"></div><div style="left:459px;top:486px;width:1px;height:165px;background:#e3e3e3"></div><div style="left:1269px;top:216px;width:1px;height:15px;background:#6f8ccc"></div><div style="left:424px;top:81px;width:1398px;height:546px;overflow:hidden"><div class="cw"><div class="c" style="position:absolute;left:6.286px;top:1px">    <span class="k">def</span> setUp(<span class="sf">self</span>):</div><div class="c" style="position:absolute;left:6.286px;top:16px">        <span class="sf">self</span>.user = <span class="sf">self</span>.make_user()</div><div class="c" style="position:absolute;left:6.286px;top:31px">        <span class="sf">self</span>.factory = RequestFactory()</div><div class="c" style="position:absolute;left:6.286px;top:46px"></div><div class="c" style="position:absolute;left:6.286px;top:61px"></div><div class="c" style="position:absolute;left:6.286px;top:76px"><span class="k">class</span> TestUserRedirectView(BaseUserTestCase):</div><div class="c" style="position:absolute;left:6.286px;top:91px"></div><div class="c" style="position:absolute;left:6.286px;top:106px">    <span class="k">def</span> test_get_redirect_url(<span class="sf">self</span>):  <span class="iv">self: test_get_redirect_url (reddit.users.tests.test_views.TestUserRedirectView)</span></div><div class="c" style="position:absolute;left:6.286px;top:121px">        <span class="cm"># Instantiate the view directly. Never do this outside a test!</span></div><div class="c" style="position:absolute;left:6.286px;top:136px;color:#fff">        view = UserRedirectView()</div><div class="c" style="position:absolute;left:6.286px;top:151px">        <span class="cm"># Generate a fake request</span></div><div class="c" style="position:absolute;left:6.286px;top:166px">        request = <span class="sf">self</span>.factory.get(<span class="st">&#x27;/fake-url&#x27;</span>)</div><div class="c" style="position:absolute;left:6.286px;top:181px">        <span class="cm"># Attach the user to the request</span></div><div class="c" style="position:absolute;left:6.286px;top:196px">        request.user = <span class="sf">self</span>.user</div><div class="c" style="position:absolute;left:6.286px;top:211px">        <span class="cm"># Attach the request to the view</span></div><div class="c" style="position:absolute;left:6.286px;top:226px">        view.request = request</div><div class="c" style="position:absolute;left:6.286px;top:241px">        <span class="cm"># Expect: &#x27;/users/testuser/&#x27;, as that is the default username for</span></div><div class="c" style="position:absolute;left:6.286px;top:256px">        <span class="cm">#   self.make_user()</span></div><div class="c" style="position:absolute;left:6.286px;top:271px">        <span class="sf">self</span>.assertEqual(</div><div class="c" style="position:absolute;left:6.286px;top:286px">            view.get_redirect_url(),</div><div class="c" style="position:absolute;left:6.286px;top:301px">            <span class="st">&#x27;/users/testuser/&#x27;</span></div><div class="c" style="position:absolute;left:6.286px;top:316px">        )</div><div class="c" style="position:absolute;left:6.286px;top:331px"></div><div class="c" style="position:absolute;left:6.286px;top:346px"></div><div class="c" style="position:absolute;left:6.286px;top:361px"><span class="k">class</span> TestUserUpdateView(BaseUserTestCase):</div><div class="c" style="position:absolute;left:6.286px;top:376px"></div><div class="c" style="position:absolute;left:6.286px;top:391px">    <span class="k">def</span> setUp(<span class="sf">self</span>):</div><div class="c" style="position:absolute;left:6.286px;top:406px">        <span class="cm"># call BaseUserTestCase.setUp()</span></div><div class="c" style="position:absolute;left:6.286px;top:421px">        <span class="bi">super</span>(TestUserUpdateView, <span class="sf">self</span>).setUp()</div><div class="c" style="position:absolute;left:6.286px;top:436px">        <span class="cm"># Instantiate the view directly. Never do this outside a test!</span></div><div class="c" style="position:absolute;left:6.286px;top:451px">        <span class="sf">self</span>.view = UserUpdateView()</div><div class="c" style="position:absolute;left:6.286px;top:466px">        <span class="cm"># Generate a fake request</span></div><div class="c" style="position:absolute;left:6.286px;top:481px">        request = <span class="sf">self</span>.factory.get(<span class="st">&#x27;/fake-url&#x27;</span>)</div><div class="c" style="position:absolute;left:6.286px;top:496px">        <span class="cm"># Attach the user to the request</span></div><div class="c" style="position:absolute;left:6.286px;top:511px">        request.user = <span class="sf">self</span>.user</div><div class="c" style="position:absolute;left:6.286px;top:526px">        <span class="cm"># Attach the request to the view</span></div><div class="c" style="position:absolute;left:6.286px;top:541px">        <span class="sf">self</span>.view.request = request</div></div></div><svg style="left:0;top:0" width="1" height="1" overflow="visible"><path d="M611.0 335.0 L613.0 334.0 L615.0 335.5 L617.0 334.0 L619.0 335.5 L621.0 334.0 L623.0 335.5 L625.0 334.0 L627.0 335.5 L629.0 334.0 L631.0 335.5 L633.0 334.0 L635.0 335.5 L637.0 334.0 L639.0 335.5 L641.0 334.0 L643.0 335.5 L645.0 334.0 L647.0 335.5 L649.0 334.0 L651.0 335.5 L653.0 334.0 L655.0 335.5 L657.0 334.0 L659.0 335.5 L661.0 334.0 L663.0 335.5 L665.0 334.0 L667.0 335.5" fill="none" stroke="#8fc78f" stroke-width="0.8"/></svg><svg style="left:0;top:0" width="1" height="1" overflow="visible"><path d="M569.0 395.0 L571.0 394.0 L573.0 395.5 L575.0 394.0 L577.0 395.5 L579.0 394.0 L581.0 395.5 L583.0 394.0 L585.0 395.5 L587.0 394.0 L589.0 395.5 L591.0 394.0 L593.0 395.5 L595.0 394.0 L597.0 395.5 L599.0 394.0 L601.0 395.5 L603.0 394.0 L605.0 395.5 L607.0 394.0 L609.0 395.5 L611.0 394.0 L613.0 395.5 L615.0 394.0 L617.0 395.5 L619.0 394.0 L621.0 395.5 L623.0 394.0 L625.0 395.5" fill="none" stroke="#8fc78f" stroke-width="0.8"/></svg><svg style="left:395px;top:217px" width="13" height="13" viewBox="0 0 13 13"><circle cx="6.5" cy="6.5" r="6" fill="#e0605a"/><circle cx="6.5" cy="6.5" r="6" fill="url(#bg1)"/><defs><radialGradient id="bg1" cx="0.4" cy="0.3" r="0.7"><stop offset="0" stop-color="#f2a090" stop-opacity="0.8"/><stop offset="1" stop-color="#d64a40" stop-opacity="0"/></radialGradient></defs></svg><svg style="left:437px;top:213px" width="12" height="17" viewBox="0 0 12 17"><path d="M6 0.5a5.5 5.5 0 0 1 3.5 9.7V11.5h-7V10.2A5.5 5.5 0 0 1 6 0.5z" fill="#f5b548"/><path d="M3.5 5l1.2 1.8L6 5l1.3 1.8L8.5 5" fill="none" stroke="#fff3c8" stroke-width="0.9"/><rect x="3" y="12" width="6" height="1.6" fill="#8c8c8c"/><rect x="3" y="14.3" width="6" height="1.6" fill="#8c8c8c"/></svg><svg style="left:419px;top:85px" width="9" height="10" viewBox="0 0 9 10"><path d="M0.5 0.5h8v6l-4 3.5l-4-3.5z" fill="#fff" stroke="#bdbdbd" stroke-width="1"/><path d="M2.3 4h4.4" stroke="#b0b0b0" stroke-width="1"/></svg><svg style="left:419px;top:160px" width="9" height="10" viewBox="0 0 9 10"><path d="M0.5 0.5h8v6l-4 3.5l-4-3.5z" fill="#fff" stroke="#bdbdbd" stroke-width="1"/><path d="M2.3 4h4.4" stroke="#b0b0b0" stroke-width="1"/></svg><svg style="left:419px;top:190px" width="9" height="10" viewBox="0 0 9 10"><path d="M0.5 0.5h8v6l-4 3.5l-4-3.5z" fill="#fff" stroke="#bdbdbd" stroke-width="1"/><path d="M2.3 4h4.4" stroke="#b0b0b0" stroke-width="1"/></svg><svg style="left:419px;top:325px" width="9" height="10" viewBox="0 0 9 10"><path d="M0.5 0.5h8v6l-4 3.5l-4-3.5z" fill="#fff" stroke="#bdbdbd" stroke-width="1"/><path d="M2.3 4h4.4" stroke="#b0b0b0" stroke-width="1"/></svg><svg style="left:419px;top:445px" width="9" height="10" viewBox="0 0 9 10"><path d="M0.5 0.5h8v6l-4 3.5l-4-3.5z" fill="#fff" stroke="#bdbdbd" stroke-width="1"/><path d="M2.3 4h4.4" stroke="#b0b0b0" stroke-width="1"/></svg><svg style="left:419px;top:475px" width="9" height="10" viewBox="0 0 9 10"><path d="M0.5 0.5h8v6l-4 3.5l-4-3.5z" fill="#fff" stroke="#bdbdbd" stroke-width="1"/><path d="M2.3 4h4.4" stroke="#b0b0b0" stroke-width="1"/></svg><svg style="left:419px;top:113.5px" width="9" height="10" viewBox="0 0 9 10"><path d="M0.5 9.5h8v-6l-4-3.5l-4 3.5z" fill="#fff" stroke="#bdbdbd" stroke-width="1"/><path d="M2.3 6h4.4" stroke="#b0b0b0" stroke-width="1"/></svg><svg style="left:419px;top:338.5px" width="9" height="10" viewBox="0 0 9 10"><path d="M0.5 9.5h8v-6l-4-3.5l-4 3.5z" fill="#fff" stroke="#bdbdbd" stroke-width="1"/><path d="M2.3 6h4.4" stroke="#b0b0b0" stroke-width="1"/></svg><svg style="left:419px;top:398.5px" width="9" height="10" viewBox="0 0 9 10"><path d="M0.5 9.5h8v-6l-4-3.5l-4 3.5z" fill="#fff" stroke="#bdbdbd" stroke-width="1"/><path d="M2.3 6h4.4" stroke="#b0b0b0" stroke-width="1"/></svg><svg style="left:0;top:0" width="1" height="1" viewBox="0 0 1 1" overflow="visible"><g transform="translate(-0,-0)"><circle cx="384" cy="89" r="4" fill="#74bde8"/><rect x="382.4" y="87.4" width="3.2" height="3.2" rx="1" fill="#8fdcff" stroke="#444" stroke-width="1.1"/><path d="M389.5 94V83" stroke="#d85a48" stroke-width="1.3"/><path d="M387.0 85.5L389.5 82L392.0 85.5z" fill="#d85a48"/></g></svg><svg style="left:0;top:0" width="1" height="1" viewBox="0 0 1 1" overflow="visible"><g transform="translate(-0,-0)"><circle cx="399" cy="87" r="4" fill="#74bde8"/><rect x="397.4" y="85.4" width="3.2" height="3.2" rx="1" fill="#8fdcff" stroke="#444" stroke-width="1.1"/><path d="M404.5 82V93" stroke="#444" stroke-width="1.3"/><path d="M402.0 90.5L404.5 94L407.0 90.5z" fill="#444"/></g></svg><svg style="left:0;top:0" width="1" height="1" viewBox="0 0 1 1" overflow="visible"><g transform="translate(-0,-0)"><circle cx="399.5" cy="479" r="4" fill="#74bde8"/><rect x="397.9" y="477.4" width="3.2" height="3.2" rx="1" fill="#8fdcff" stroke="#444" stroke-width="1.1"/><path d="M405 484V473" stroke="#d85a48" stroke-width="1.3"/><path d="M402.5 475.5L405 472L407.5 475.5z" fill="#d85a48"/></g></svg><div style="left:1822px;top:188px;width:10px;height:274px;background:#b4b4b4"></div><div style="left:1822px;top:216px;width:10px;height:15px;background:#7889a8"></div><div style="left:1818px;top:256px;width:4px;height:2px;background:#1f4fa8"></div><div style="left:1822px;top:256px;width:10px;height:2px;background:#7a8aa8"></div><svg style="left:1818px;top:82px" width="13" height="14" viewBox="0 0 13 14"><path d="M1 5l4 4l7-8" fill="none" stroke="#3aa33a" stroke-width="2"/><path d="M1 12l2-2l2 2l2-2l2 2l2-2" fill="none" stroke="#3aa33a" stroke-width="0.8"/></svg><div style="left:23px;top:627px;width:1809px;height:1px;background:#a9a9a9"></div><div style="left:23px;top:628px;width:1809px;height:24px;background:linear-gradient(#cbd4e3,#c3cddd)"></div><div style="left:23px;top:652px;width:1809px;height:1px;background:#8f99a8"></div><div class="t" style="left:27.30px;top:641px;font-size:13px;letter-spacing:0.505px;word-spacing:0">Debug</div><svg style="left:72px;top:633px" width="14" height="14" viewBox="0 0 14 14"><rect x="0" y="0" width="14" height="14" rx="1.5" fill="#2d6a45"/><text x="1.2" y="10.5" font-family="Liberation Sans" font-weight="bold" font-size="11" fill="#fff">di</text><path d="M9 11.5l3-2v4z" fill="#e03030"/><circle cx="12.5" cy="12.5" r="2" fill="#2ec02e"/></svg><div class="t" style="left:90.80px;top:641px;font-size:13px;letter-spacing:0.399px;word-spacing:0">Docker: tests - all</div><svg style="left:0;top:0" width="1" height="1" overflow="visible"><g fill="#6a6a6a"><circle cx="1791" cy="640" r="4.2" fill="none" stroke="#6a6a6a" stroke-width="2.6"/><path d="M1791 633.5v13M1784.5 640h13M1786.4 635.4l9.2 9.2M1795.6 635.4l-9.2 9.2" stroke="#6a6a6a" stroke-width="1.8"/><circle cx="1791" cy="640" r="1.5" fill="#c8d1e1"/><path d="M1799 638.8h5l-2.5 3z"/><path d="M1817.5 634v5" stroke="#6a6a6a" stroke-width="1.2"/><path d="M1815 638.5h5l-2.5 3z"/><rect x="1814" y="643" width="11" height="3" rx="0.5"/><rect x="1819.5" y="643.8" width="4.6" height="1.4" fill="#dde2ea"/></g></svg><div style="left:23px;top:653px;width:29px;height:357px;background:#e9e9e9"></div><div style="left:52px;top:653px;width:1px;height:357px;background:#a9a9a9"></div><div style="left:53px;top:653px;width:1779px;height:27px;background:#e9e9e9"></div><div style="left:53px;top:653px;width:72px;height:28px;background:#fff"></div><div style="left:125px;top:653px;width:96px;height:27px;background:#d4d4d4;border-left:1px solid #b8b8b8;border-right:1px solid #b8b8b8"></div><div class="t" style="left:58.40px;top:667px;font-size:13px;letter-spacing:0.490px;word-spacing:0">Debugger</div><svg style="left:131px;top:660px" width="14" height="13" viewBox="0 0 14 13"><rect x="0.5" y="0.5" width="13" height="12" fill="#d9ecf8" stroke="#6b6b6b" stroke-width="1"/><rect x="0.5" y="0.5" width="13" height="2.5" fill="#4a9fd8"/><path d="M3 5.5h7M3 7.5h7M3 9.5h4" stroke="#555" stroke-width="1"/></svg><div class="t" style="left:149.90px;top:667px;font-size:13px;color:#333;letter-spacing:0.156px;word-spacing:0">Console</div><svg style="left:205px;top:662px" width="13" height="9" viewBox="0 0 13 9"><path d="M0 5h8M5 2.5l3 2.5l-3 2.5" fill="none" stroke="#555" stroke-width="1"/><rect x="10" y="1" width="3" height="3" fill="#555"/></svg><div style="left:53px;top:680px;width:1779px;height:1px;background:#a9a9a9"></div><div style="left:53px;top:681px;width:1779px;height:3px;background:#fff"></div><div style="left:53px;top:684px;width:1779px;height:1px;background:#a9a9a9"></div><svg style="left:226px;top:659px" width="15" height="15" viewBox="0 0 15 15"><path d="M0 0L7 5L0 10z" fill="#d9574a"/><path d="M7 4.5h7M7 7.5h7" stroke="#777" stroke-width="1.6"/><path d="M3 10.5h11M3 13.5h11" stroke="#3d7ab8" stroke-width="1.6"/></svg><div style="left:249px;top:658px;width:1px;height:17px;background:#c4c4c4"></div><svg style="left:256px;top:659px" width="15" height="15" viewBox="0 0 15 15"><path d="M1 0.8h14" stroke="#777" stroke-width="1.6"/><path d="M7.5 3v4" stroke="#3a8fc8" stroke-width="3"/><path d="M2.5 6.5h10l-5 5z" fill="#3a8fc8"/><rect x="0" y="12" width="15" height="2" fill="#777"/></svg><svg style="left:281px;top:659px" width="15" height="15" viewBox="0 0 15 15"><path d="M2 1l6 6" stroke="#3a8fc8" stroke-width="3.2"/><path d="M11 2.5v8.5H2.5z" fill="#3a8fc8"/><rect x="0" y="12" width="15" height="2" fill="#777"/></svg><svg style="left:306px;top:659px" width="15" height="15" viewBox="0 0 15 15"><path d="M2 1l6 6" stroke="#3a8fc8" stroke-width="3.2"/><path d="M11 2.5v8.5H2.5z" fill="#3a8fc8"/><path d="M0 7h3M11.5 7h3" stroke="#e0604f" stroke-width="1.6"/><rect x="0" y="12" width="15" height="2" fill="#777"/></svg><svg style="left:331px;top:659px" width="15" height="15" viewBox="0 0 15 15"><path d="M1 2.5q4 -1 7.5 4" fill="none" stroke="#9a9a9a" stroke-width="3"/><path d="M12 3.5v7.5H4.5z" fill="#9a9a9a"/><rect x="0" y="12" width="15" height="2" fill="#777"/></svg><svg style="left:356px;top:659px" width="15" height="15" viewBox="0 0 15 15"><path d="M3 10l6-6" stroke="#3a8fc8" stroke-width="3.2"/><path d="M13 0.5v8.5L4.5 0.5z" fill="#3a8fc8"/><rect x="0" y="12" width="15" height="2" fill="#777"/></svg><svg style="left:381px;top:659px" width="15" height="15" viewBox="0 0 15 15"><path d="M0.5 0.5l4.5 4.5" stroke="#3a8fc8" stroke-width="2.8"/><path d="M8 2v6.5H1.5z" fill="#3a8fc8"/><path d="M9.5 5.5h4M11.5 5.5v9M9.5 14.5h4" stroke="#333" stroke-width="1.4"/></svg><div style="left:405px;top:658px;width:1px;height:17px;background:#c4c4c4"></div><svg style="left:414px;top:660px" width="14" height="12" viewBox="0 0 14 12"><rect x="0.5" y="0.5" width="13" height="11" fill="#e8eef4" stroke="#777" stroke-width="1"/><rect x="1.5" y="1.5" width="11" height="2.5" fill="#4a8fc8"/><path d="M2.5 6.5h2M6 6.5h2M2.5 9h2M6 9h2" stroke="#666" stroke-width="1"/><path d="M9.5 6.5h2.5" stroke="#e04a3f" stroke-width="1"/><path d="M9.5 9h2.5" stroke="#2ea83a" stroke-width="1"/></svg><svg style="left:30px;top:659px" width="15" height="15" viewBox="0 0 15 15"><path d="M10.5 4.5A5.5 5.5 0 1 0 8 13" fill="none" stroke="#2ea83a" stroke-width="2"/><path d="M7 0l5 4l-5.5 2z" fill="#2ea83a"/><rect x="7" y="7" width="7" height="7" fill="#808080"/></svg><div style="left:27px;top:682px;width:22px;height:1px;background:#c4c4c4"></div><svg style="left:31px;top:690px" width="14" height="14" viewBox="0 0 14 14"><path d="M0 1h3M0 3h3M0 5h3M0 7h3M0 9h3M0 11h3M0 13h3" stroke="#555" stroke-width="0.8"/><path d="M4 0L14 7L4 14z" fill="#36a33f"/></svg><svg style="left:32px;top:716px" width="11" height="12" viewBox="0 0 11 12"><rect x="0" y="0" width="4" height="12" fill="#9a9a9a"/><rect x="7" y="0" width="4" height="12" fill="#9a9a9a"/></svg><svg style="left:31px;top:741px" width="12" height="12" viewBox="0 0 12 12"><rect x="0" y="0" width="12" height="12" fill="#e0554e"/></svg><div style="left:27px;top:763px;width:22px;height:1px;background:#c4c4c4"></div><svg style="left:30px;top:769px" width="15" height="14" viewBox="0 0 15 14"><circle cx="5" cy="4.5" r="4.5" fill="#e0554e"/><circle cx="5" cy="10" r="4.5" fill="#e0554e"/><circle cx="12.5" cy="4.5" r="1.3" fill="#777"/><circle cx="12.5" cy="9" r="1.3" fill="#777"/></svg><svg style="left:30px;top:796px" width="14" height="14" viewBox="0 0 14 14"><circle cx="7" cy="7" r="6.3" fill="#e0554e" stroke="#777" stroke-width="1"/><path d="M2.5 11.5l9-9" stroke="#bbb" stroke-width="2"/></svg><div style="left:27px;top:819px;width:22px;height:1px;background:#c4c4c4"></div><svg style="left:30px;top:827px" width="14" height="14" viewBox="0 0 14 14"><rect x="0.5" y="0.5" width="6" height="6" fill="#fff" stroke="#555"/><rect x="8.5" y="0.5" width="5" height="6" fill="#5a9fd4" stroke="#555"/><rect x="0.5" y="9" width="13" height="4" fill="#fff" stroke="#555"/></svg><svg style="left:30px;top:852px" width="15" height="16" viewBox="0 0 15 16"><circle cx="6.5" cy="6.5" r="3.6" fill="none" stroke="#3a8fc8" stroke-width="2.6"/><path d="M6.5 0v13M0 6.5h13M2 2l9 9M11 2L2 11" stroke="#3a8fc8" stroke-width="2"/><circle cx="6.5" cy="6.5" r="1.4" fill="#e9e9e9"/><path d="M11 12h4l-2 2.5z" fill="#555"/></svg><div style="left:27px;top:875px;width:22px;height:1px;background:#c4c4c4"></div><svg style="left:30px;top:883px" width="14" height="15" viewBox="0 0 14 15"><path d="M0 15l5-5" stroke="#777" stroke-width="1.5"/><path d="M4 6l5 5l2-2l-1.5-1.5l3-3l1 1l0.5-2.5l-4.5-4.5l-2.5 0.5l1 1l-3 3l-1.5-1.5z" fill="#a060c0"/></svg><svg style="left:31px;top:910px" width="12" height="12" viewBox="0 0 12 12"><path d="M1 1l10 10M11 1L1 11" stroke="#e0554e" stroke-width="2.4"/></svg><div style="left:30px;top:929px;font-family:'Liberation Sans';font-weight:bold;font-size:19px;line-height:20px;color:#3a8fc8">?</div><div style="left:53px;top:685px;width:1779px;height:28px;background:linear-gradient(#cbd4e3,#c3cddd)"></div><div style="left:53px;top:713px;width:1779px;height:1px;background:#8f99a8"></div><div style="left:408px;top:685px;width:1px;height:325px;background:#a9a9a9"></div><div style="left:1476px;top:685px;width:1px;height:325px;background:#a9a9a9"></div><svg style="left:58px;top:692px" width="14" height="14" viewBox="0 0 14 14"><rect x="0.5" y="0.5" width="10" height="9" fill="#fff" stroke="#777"/><rect x="2" y="2" width="10" height="9" fill="#fff" stroke="#777"/><rect x="3.5" y="3.5" width="10" height="10" fill="#7fb6e2" stroke="#777"/><path d="M7 5.5l-2 1.8l2 1.8M9.5 8.5l2 1.8l-2 1.8" fill="none" stroke="#223" stroke-width="0.9"/></svg><div class="t" style="left:75.50px;top:698px;font-size:13px;letter-spacing:-0.132px;word-spacing:0">Frames</div><svg style="left:393px;top:693px" width="12" height="8" viewBox="0 0 12 8"><path d="M0 5h7M4.5 2.5l2.5 2.5l-2.5 2.5" fill="none" stroke="#666" stroke-width="1"/><rect x="9" y="0.5" width="3" height="3" fill="#555"/></svg><svg style="left:1461px;top:693px" width="12" height="8" viewBox="0 0 12 8"><path d="M0 5h7M4.5 2.5l2.5 2.5l-2.5 2.5" fill="none" stroke="#666" stroke-width="1"/><rect x="9" y="0.5" width="3" height="3" fill="#555"/></svg><svg style="left:1817px;top:693px" width="12" height="8" viewBox="0 0 12 8"><path d="M0 5h7M4.5 2.5l2.5 2.5l-2.5 2.5" fill="none" stroke="#666" stroke-width="1"/><rect x="9" y="0.5" width="3" height="3" fill="#555"/></svg><svg style="left:415px;top:691px" width="13" height="13" viewBox="0 0 13 13"><rect x="0" y="0" width="13" height="3" fill="#c49a5a"/><rect x="0" y="5" width="13" height="3" fill="#c49a5a"/><rect x="0" y="10" width="13" height="3" fill="#c49a5a"/></svg><div class="t" style="left:432.00px;top:698px;font-size:13px;letter-spacing:0.346px;word-spacing:0">Variables</div><svg style="left:1481px;top:690px" width="15" height="15" viewBox="0 0 15 15"><rect x="1" y="0" width="14" height="12" fill="#e0e0e0"/><rect x="1" y="0" width="14" height="2.5" fill="#4a9fd8"/><path d="M4 10l3-6l3 5l3-6" fill="none" stroke="#777" stroke-width="1"/><ellipse cx="3.5" cy="11.5" rx="3" ry="3.5" fill="#5cb85c"/><ellipse cx="9" cy="12" rx="3" ry="3.2" fill="#5cb85c"/></svg><div class="t" style="left:1499.50px;top:698px;font-size:13px;letter-spacing:0.368px;word-spacing:0">Watches</div><div style="left:53px;top:714px;width:355px;height:29px;background:#e9e9e9"></div><div style="left:55px;top:715px;width:297px;height:27px;background:linear-gradient(#efefef,#e2e2e2);border:1px solid #a0a0a0;border-radius:3px"></div><div style="left:327px;top:715px;width:25px;height:27px;background:#4a7fd6;border-radius:0 3px 3px 0"></div><svg style="left:334px;top:725px" width="10" height="7" viewBox="0 0 10 7"><path d="M0 0h10l-5 7z" fill="#fff"/></svg><svg style="left:62px;top:719px" width="9" height="18" viewBox="0 0 9 18"><rect x="0" y="0" width="9" height="2.5" fill="#333"/><rect x="0" y="15.5" width="9" height="2.5" fill="#333"/><rect x="1.5" y="2" width="6" height="14" fill="#c4923a"/><path d="M1.5 4h6M1.5 7h6M1.5 10h6M1.5 13h6" stroke="#7a5a20" stroke-width="0.9"/></svg><div class="t" style="left:78.30px;top:728px;font-size:15px;letter-spacing:0.378px;word-spacing:0">MainThread</div><div style="left:356px;top:718px;width:1px;height:21px;background:#c4c4c4"></div><svg style="left:364px;top:721px" width="12" height="13" viewBox="0 0 12 13"><path d="M6 0L12 6H8.5v7h-5V6H0z" fill="#8a8a8a"/></svg><svg style="left:389px;top:721px" width="12" height="13" viewBox="0 0 12 13"><path d="M6 13L12 7H8.5V0h-5v7H0z" fill="#3a9ad6"/></svg><div style="left:53px;top:743px;width:341px;height:267px;background:#ffffe4"></div><div style="left:394px;top:743px;width:14px;height:267px;background:#fff"></div><div style="left:398px;top:743px;width:10px;height:163px;background:#b4b4b4"></div><div style="left:53px;top:743px;width:341px;height:22px;background:#3875d7;outline:1px dotted #000;outline-offset:-1px"></div><svg style="left:56px;top:747px" width="14" height="14" viewBox="0 0 14 14"><rect x="0.5" y="0.5" width="10" height="9" fill="#fff" stroke="#777"/><rect x="2" y="2" width="10" height="9" fill="#fff" stroke="#777"/><rect x="3.5" y="3.5" width="10" height="10" fill="#7fb6e2" stroke="#777"/><path d="M7 5.5l-2 1.8l2 1.8M9.5 8.5l2 1.8l-2 1.8" fill="none" stroke="#223" stroke-width="0.9"/></svg><div class="t" style="left:74.20px;top:754px;font-size:14px;color:#fff;letter-spacing:0.768px;word-spacing:0">test_get_redirect_url, test_views.py:22</div><svg style="left:56px;top:769px" width="14" height="14" viewBox="0 0 14 14"><rect x="0.5" y="0.5" width="10" height="9" fill="#fff" stroke="#777"/><rect x="2" y="2" width="10" height="9" fill="#fff" stroke="#777"/><rect x="3.5" y="3.5" width="10" height="10" fill="#7fb6e2" stroke="#777"/><path d="M7 5.5l-2 1.8l2 1.8M9.5 8.5l2 1.8l-2 1.8" fill="none" stroke="#223" stroke-width="0.9"/></svg><div class="t" style="left:74.20px;top:776px;font-size:14px;color:#b4b4b4;letter-spacing:0.432px;word-spacing:0">run, case.py:329</div><svg style="left:56px;top:791px" width="14" height="14" viewBox="0 0 14 14"><rect x="0.5" y="0.5" width="10" height="9" fill="#fff" stroke="#777"/><rect x="2" y="2" width="10" height="9" fill="#fff" stroke="#777"/><rect x="3.5" y="3.5" width="10" height="10" fill="#7fb6e2" stroke="#777"/><path d="M7 5.5l-2 1.8l2 1.8M9.5 8.5l2 1.8l-2 1.8" fill="none" stroke="#223" stroke-width="0.9"/></svg><div class="t" style="left:75.20px;top:798px;font-size:14px;color:#b4b4b4;letter-spacing:0.083px;word-spacing:0">__call__, case.py:393</div><svg style="left:56px;top:813px" width="14" height="14" viewBox="0 0 14 14"><rect x="0.5" y="0.5" width="10" height="9" fill="#fff" stroke="#777"/><rect x="2" y="2" width="10" height="9" fill="#fff" stroke="#777"/><rect x="3.5" y="3.5" width="10" height="10" fill="#7fb6e2" stroke="#777"/><path d="M7 5.5l-2 1.8l2 1.8M9.5 8.5l2 1.8l-2 1.8" fill="none" stroke="#223" stroke-width="0.9"/></svg><div class="t" style="left:75.20px;top:820px;font-size:14px;color:#b4b4b4;letter-spacing:0.264px;word-spacing:0">__call__, testcases.py:214</div><svg style="left:56px;top:835px" width="14" height="14" viewBox="0 0 14 14"><rect x="0.5" y="0.5" width="10" height="9" fill="#fff" stroke="#777"/><rect x="2" y="2" width="10" height="9" fill="#fff" stroke="#777"/><rect x="3.5" y="3.5" width="10" height="10" fill="#7fb6e2" stroke="#777"/><path d="M7 5.5l-2 1.8l2 1.8M9.5 8.5l2 1.8l-2 1.8" fill="none" stroke="#223" stroke-width="0.9"/></svg><div class="t" style="left:74.20px;top:842px;font-size:14px;color:#b4b4b4;letter-spacing:0.530px;word-spacing:0">run, suite.py:108</div><svg style="left:56px;top:857px" width="14" height="14" viewBox="0 0 14 14"><rect x="0.5" y="0.5" width="10" height="9" fill="#fff" stroke="#777"/><rect x="2" y="2" width="10" height="9" fill="#fff" stroke="#777"/><rect x="3.5" y="3.5" width="10" height="10" fill="#7fb6e2" stroke="#777"/><path d="M7 5.5l-2 1.8l2 1.8M9.5 8.5l2 1.8l-2 1.8" fill="none" stroke="#223" stroke-width="0.9"/></svg><div class="t" style="left:75.20px;top:864px;font-size:14px;color:#b4b4b4;letter-spacing:0.172px;word-spacing:0">__call__, suite.py:70</div><svg style="left:56px;top:879px" width="14" height="14" viewBox="0 0 14 14"><rect x="0.5" y="0.5" width="10" height="9" fill="#fff" stroke="#777"/><rect x="2" y="2" width="10" height="9" fill="#fff" stroke="#777"/><rect x="3.5" y="3.5" width="10" height="10" fill="#7fb6e2" stroke="#777"/><path d="M7 5.5l-2 1.8l2 1.8M9.5 8.5l2 1.8l-2 1.8" fill="none" stroke="#223" stroke-width="0.9"/></svg><div class="t" style="left:74.20px;top:886px;font-size:14px;color:#b4b4b4;letter-spacing:0.811px;word-spacing:0">run, tcunittest.py:259</div><svg style="left:56px;top:901px" width="14" height="14" viewBox="0 0 14 14"><rect x="0.5" y="0.5" width="10" height="9" fill="#fff" stroke="#777"/><rect x="2" y="2" width="10" height="9" fill="#fff" stroke="#777"/><rect x="3.5" y="3.5" width="10" height="10" fill="#7fb6e2" stroke="#777"/><path d="M7 5.5l-2 1.8l2 1.8M9.5 8.5l2 1.8l-2 1.8" fill="none" stroke="#223" stroke-width="0.9"/></svg><div class="t" style="left:74.20px;top:908px;font-size:14px;color:#b4b4b4;letter-spacing:0.692px;word-spacing:0">run_suite, django_test_runner.py:151</div><svg style="left:56px;top:923px" width="14" height="14" viewBox="0 0 14 14"><rect x="0.5" y="0.5" width="10" height="9" fill="#fff" stroke="#777"/><rect x="2" y="2" width="10" height="9" fill="#fff" stroke="#777"/><rect x="3.5" y="3.5" width="10" height="10" fill="#7fb6e2" stroke="#777"/><path d="M7 5.5l-2 1.8l2 1.8M9.5 8.5l2 1.8l-2 1.8" fill="none" stroke="#223" stroke-width="0.9"/></svg><div class="t" style="left:74.20px;top:930px;font-size:14px;color:#b4b4b4;letter-spacing:0.744px;word-spacing:0">run_tests, runner.py:533</div><svg style="left:56px;top:945px" width="14" height="14" viewBox="0 0 14 14"><rect x="0.5" y="0.5" width="10" height="9" fill="#fff" stroke="#777"/><rect x="2" y="2" width="10" height="9" fill="#fff" stroke="#777"/><rect x="3.5" y="3.5" width="10" height="10" fill="#7fb6e2" stroke="#777"/><path d="M7 5.5l-2 1.8l2 1.8M9.5 8.5l2 1.8l-2 1.8" fill="none" stroke="#223" stroke-width="0.9"/></svg><div class="t" style="left:74.20px;top:952px;font-size:14px;color:#b4b4b4;letter-spacing:0.738px;word-spacing:0">run_tests, django_test_runner.py:156</div><svg style="left:56px;top:967px" width="14" height="14" viewBox="0 0 14 14"><rect x="0.5" y="0.5" width="10" height="9" fill="#fff" stroke="#777"/><rect x="2" y="2" width="10" height="9" fill="#fff" stroke="#777"/><rect x="3.5" y="3.5" width="10" height="10" fill="#7fb6e2" stroke="#777"/><path d="M7 5.5l-2 1.8l2 1.8M9.5 8.5l2 1.8l-2 1.8" fill="none" stroke="#223" stroke-width="0.9"/></svg><div class="t" style="left:74.20px;top:974px;font-size:14px;color:#b4b4b4;letter-spacing:0.738px;word-spacing:0">run_tests, django_test_runner.py:256</div><svg style="left:56px;top:989px" width="14" height="14" viewBox="0 0 14 14"><rect x="0.5" y="0.5" width="10" height="9" fill="#fff" stroke="#777"/><rect x="2" y="2" width="10" height="9" fill="#fff" stroke="#777"/><rect x="3.5" y="3.5" width="10" height="10" fill="#7fb6e2" stroke="#777"/><path d="M7 5.5l-2 1.8l2 1.8M9.5 8.5l2 1.8l-2 1.8" fill="none" stroke="#223" stroke-width="0.9"/></svg><div class="t" style="left:74.20px;top:996px;font-size:14px;color:#b4b4b4;letter-spacing:0.660px;word-spacing:0">handle, django_test_manage.py:93</div><div style="left:409px;top:714px;width:1067px;height:296px;background:#fff"></div><svg style="left:413px;top:721px" width="8" height="9" viewBox="0 0 8 9"><path d="M0 0L8 4.5L0 9z" fill="#a8a8a8"/></svg><svg style="left:432px;top:719px" width="13" height="13" viewBox="0 0 13 13"><rect x="0" y="0" width="13" height="3" fill="#c49a5a"/><rect x="0" y="5" width="13" height="3" fill="#c49a5a"/><rect x="0" y="10" width="13" height="3" fill="#c49a5a"/></svg><div class="t" style="left:450.40px;top:725px;font-size:14px;color:#2020e0;letter-spacing:0.801px;word-spacing:0">self</div><div class="t" style="left:478.80px;top:725px;font-size:14px;letter-spacing:-0.800px;word-spacing:0">=</div><div class="t" style="left:490.30px;top:725px;font-size:14px;color:#8c8c8c;letter-spacing:0.808px;word-spacing:0">{TestUserRedirectView}</div><div class="t" style="left:658.00px;top:725px;font-size:14px;letter-spacing:0.861px;word-spacing:0">test_get_redirect_url (reddit.users.tests.test_views.TestUserRedirectView)</div><div style="left:1477px;top:714px;width:355px;height:26px;background:#e9e9e9"></div><div style="left:1477px;top:740px;width:355px;height:1px;background:#c8c8c8"></div><div style="left:1477px;top:741px;width:355px;height:269px;background:#fff"></div><svg style="left:1483px;top:720px" width="13" height="13" viewBox="0 0 13 13"><path d="M6.5 0v13M0 6.5h13" stroke="#2ea83a" stroke-width="2"/></svg><svg style="left:1508px;top:725px" width="13" height="3" viewBox="0 0 13 3"><rect x="0" y="0" width="13" height="2" fill="#8a8a8a"/></svg><svg style="left:1533px;top:720px" width="12" height="13" viewBox="0 0 12 13"><path d="M6 0L12 6H8.5v7h-5V6H0z" fill="#8a8a8a"/></svg><svg style="left:1558px;top:720px" width="12" height="13" viewBox="0 0 12 13"><path d="M6 13L12 7H8.5V0h-5v7H0z" fill="#8a8a8a"/></svg><svg style="left:1582px;top:718px" width="14" height="16" viewBox="0 0 14 16"><path d="M0.5 3.5h7l2 2v10h-9z" fill="#e9e9e9" stroke="#8a8a8a"/><path d="M4.5 0.5h6l3 3v9h-3" fill="none" stroke="#8a8a8a"/></svg><div class="t" style="left:1612.50px;top:834px;font-size:15px;color:#a8a8a8;letter-spacing:0.515px;word-spacing:0">No watches</div><div style="left:0px;top:1010px;width:1855px;height:1px;background:#a9a9a9"></div><div style="left:0px;top:1011px;width:1855px;height:23px;background:#e9e9e9"></div><div style="left:550px;top:1011px;width:92px;height:23px;background:#bcbcbc"></div><div style="left:0px;top:1034px;width:1855px;height:1px;background:#a9a9a9"></div><svg style="left:31px;top:1010px" width="16" height="20" viewBox="0 0 16 20"><path d="M5.6 6h3.8a0.6 0.6 0 0 1 0.6 0.6V11.1H5V14.2H2.6A0.6 0.6 0 0 1 2 13.6V9.4A0.6 0.6 0 0 1 2.6 8.8H5V6.6A0.6 0.6 0 0 1 5.6 6Z" fill="#3f7db6"/><circle cx="6.5" cy="7.5" r="0.75" fill="#fff"/><path d="M10.3 8.7H12.3A0.6 0.6 0 0 1 12.9 9.3V13A0.6 0.6 0 0 1 12.3 13.6H10.3V16.2A0.6 0.6 0 0 1 9.7 16.8H5.6A0.6 0.6 0 0 1 5 16.2V12.1A0.6 0.6 0 0 1 5.6 11.5H10.3Z" fill="#e2c040"/><path d="M10.5 13.5l3.5 3l-3.5 3" fill="none" stroke="#333" stroke-width="1.3"/></svg><div class="t" style="left:49.20px;top:1024px;font-size:13px;letter-spacing:0.435px;word-spacing:0">Python Console</div><svg style="left:172px;top:1018px" width="12" height="11" viewBox="0 0 12 11"><rect x="0.5" y="0.5" width="11" height="10" fill="#d0d0d0" stroke="#8a8a8a"/><rect x="2" y="2" width="8" height="7" fill="#9a9a9a"/><path d="M3 3.5l2 1.5l-2 1.5M5.5 7.5h3" stroke="#eee" stroke-width="0.9" fill="none"/></svg><div class="t" style="left:187.70px;top:1024px;font-size:13px;letter-spacing:0.395px;word-spacing:0">Terminal</div><svg style="left:264px;top:1016px" width="15" height="15" viewBox="0 0 15 15"><rect x="0" y="0" width="9" height="9" fill="#5a9fd4"/><circle cx="10" cy="10" r="4.5" fill="#e8a050"/><path d="M5.5 9a4.5 4.5 0 0 1 3.5-3.5V9z" fill="#2ea83a"/><circle cx="7.5" cy="7.5" r="3" fill="#2ec040"/></svg><div class="t" style="left:281.00px;top:1024px;font-size:13px;letter-spacing:0.327px;word-spacing:0"><u>9</u>: Version Control</div><svg style="left:414px;top:1017px" width="14" height="14" viewBox="0 0 14 14"><circle cx="5.5" cy="5.5" r="4.3" fill="#d8ecf8" stroke="#777" stroke-width="1.5"/><path d="M8.5 8.5l4.5 4.5" stroke="#777" stroke-width="2"/></svg><div class="t" style="left:431.00px;top:1024px;font-size:13px;letter-spacing:-0.302px;word-spacing:0"><u>3</u>: Find</div><svg style="left:489px;top:1016px" width="11" height="14" viewBox="0 0 11 14"><path d="M0 0L11 7L0 14z" fill="#36a33f"/></svg><div class="t" style="left:505.00px;top:1024px;font-size:13px;letter-spacing:-0.694px;word-spacing:0"><u>4</u>: Run</div><svg style="left:560px;top:1016px" width="16" height="16" viewBox="0 0 16 16"><ellipse cx="7" cy="8" rx="5" ry="5" fill="#3da34a"/><path d="M3 2l2 2M11 2l-2 2M0 8h2M12 8h2M1 13l2-2" stroke="#555" stroke-width="1"/><circle cx="12.5" cy="13" r="2.3" fill="#2ec02e"/></svg><div class="t" style="left:578.00px;top:1024px;font-size:13px;letter-spacing:0.067px;word-spacing:0"><u>5</u>: Debug</div><svg style="left:652px;top:1016px" width="15" height="15" viewBox="0 0 15 15"><rect x="0" y="0" width="8" height="6" rx="2" fill="#fff" stroke="#777" stroke-width="0.8"/><circle cx="9" cy="9" r="3.2" fill="#e8b070"/><path d="M4 15c0-3 2-4 5-4s5 1 5 4z" fill="#3a8fc8"/></svg><div class="t" style="left:669.80px;top:1024px;font-size:13px;letter-spacing:-0.427px;word-spacing:0"><u>6</u>: TODO</div><svg style="left:1744px;top:1017px" width="13" height="14" viewBox="0 0 13 14"><path d="M0 0h13v9H7l-3 4v-4H0z" fill="#a8a8a8"/></svg><div class="t" style="left:1761.30px;top:1024px;font-size:13px;letter-spacing:0.348px;word-spacing:0">Event Log</div><div style="left:0px;top:1035px;width:1855px;height:21px;background:#e9e9e9"></div><svg style="left:8px;top:1039px" width="14" height="14" viewBox="0 0 14 14"><rect x="0.5" y="0.5" width="13" height="13" fill="#c8c8c8" stroke="#666"/><rect x="1.5" y="11" width="11" height="2" fill="#888"/></svg><div class="t" style="left:31.40px;top:1046px;font-size:14px;letter-spacing:0.468px;word-spacing:0">Tests Passed: 7 passed (a minute ago)</div><div class="t" style="left:1590.00px;top:1046px;font-size:14px;letter-spacing:-0.154px;word-spacing:0">22:1</div><div class="t" style="left:1628.30px;top:1046px;font-size:14px;letter-spacing:-0.086px;word-spacing:0">LF</div><svg style="left:1646px;top:1040px" width="5" height="10" viewBox="0 0 5 10"><path d="M0 4h5L2.5 0z M0 6h5L2.5 10z" fill="#444"/></svg><div class="t" style="left:1661.00px;top:1046px;font-size:14px;letter-spacing:0.281px;word-spacing:0">UTF-8</div><svg style="left:1704px;top:1040px" width="5" height="10" viewBox="0 0 5 10"><path d="M0 4h5L2.5 0z M0 6h5L2.5 10z" fill="#444"/></svg><div class="t" style="left:1720.00px;top:1046px;font-size:14px;letter-spacing:0.621px;word-spacing:0">Git: master</div><svg style="left:1796px;top:1040px" width="5" height="10" viewBox="0 0 5 10"><path d="M0 4h5L2.5 0z M0 6h5L2.5 10z" fill="#444"/></svg><svg style="left:1811px;top:1039px" width="11" height="12" viewBox="0 0 11 12"><path d="M2 5V3a2.5 2.5 0 0 1 5 0" fill="none" stroke="#777" stroke-width="1.2"/><rect x="3" y="5" width="8" height="6" fill="#999"/></svg><svg style="left:1833px;top:1037px" width="15" height="16" viewBox="0 0 15 16"><circle cx="7.5" cy="8" r="5.5" fill="none" stroke="#666" stroke-width="1.2"/><path d="M2 5h11" stroke="#666" stroke-width="2"/><circle cx="5.5" cy="8.5" r="1.2" fill="#555"/><circle cx="9.5" cy="8.5" r="1.2" fill="#555"/><path d="M4 14h7" stroke="#666" stroke-width="1.5"/></svg></body></html>
